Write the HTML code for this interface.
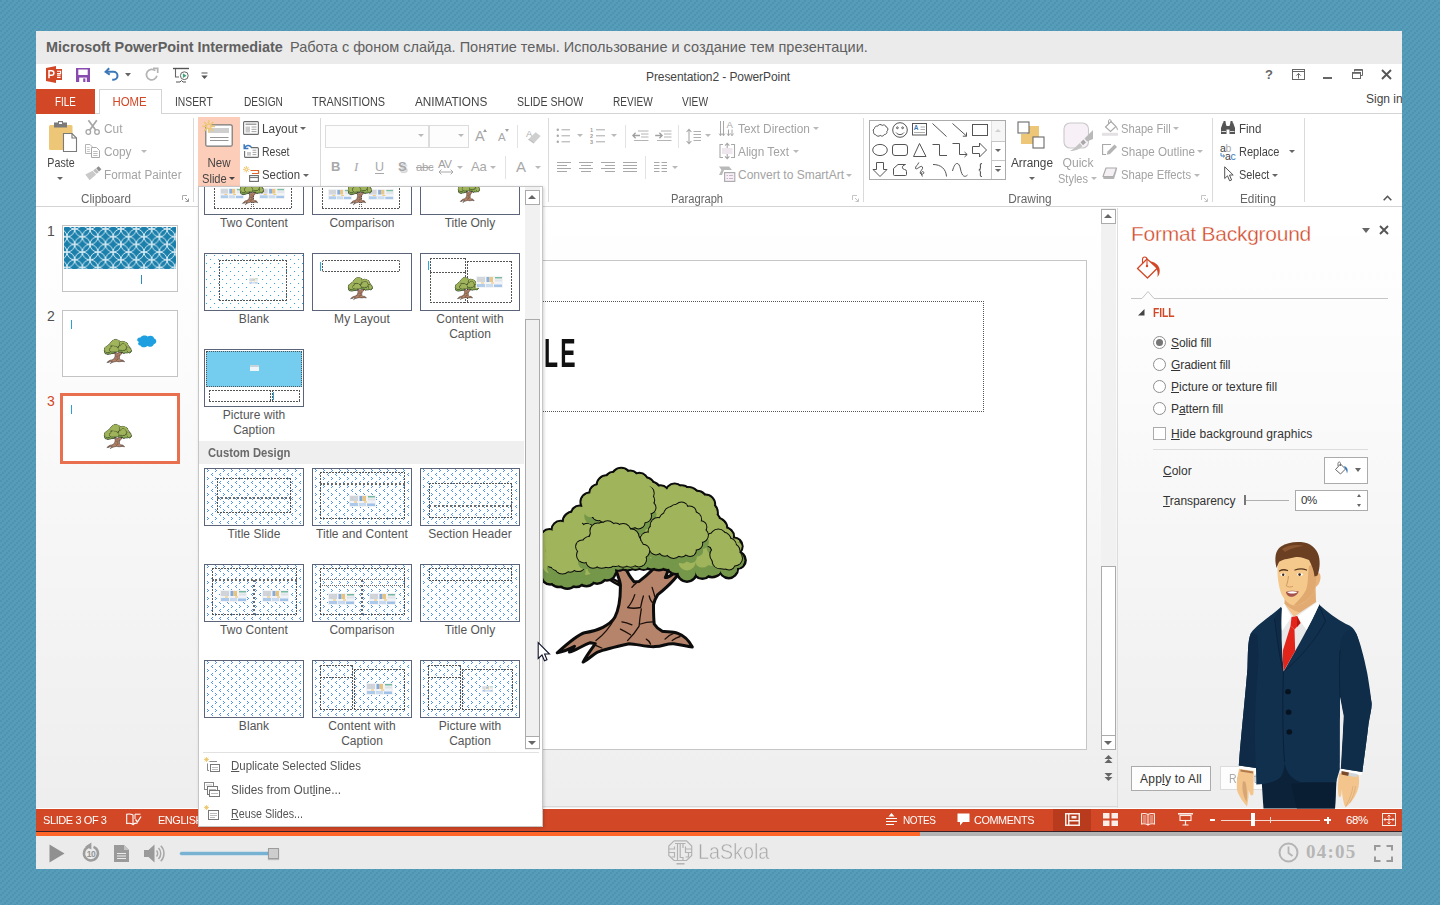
<!DOCTYPE html>
<html lang="en">
<head>
<meta charset="utf-8">
<title>Microsoft PowerPoint Intermediate</title>
<style>
*{box-sizing:border-box;margin:0;padding:0}
html,body{width:1440px;height:905px;overflow:hidden}
body{position:relative;font-family:"Liberation Sans",sans-serif;font-size:12px;color:#444;
 background-color:#569db9;
 background-image:radial-gradient(circle at 1px 1px,rgba(58,125,160,.3) .6px,rgba(58,125,160,0) 1.6px),radial-gradient(circle at 1px 1px,rgba(58,125,160,.3) .6px,rgba(58,125,160,0) 1.6px),radial-gradient(circle at 1px 1px,rgba(58,125,160,.3) .6px,rgba(58,125,160,0) 1.6px);
 background-size:6px 6px;background-position:0 0,4px 2px,2px 4px}
.a{position:absolute}
.t{position:absolute;white-space:nowrap;line-height:14px;height:14px}
.g{color:#a6a6a6}
.c{text-align:center}
u{text-decoration:underline;text-underline-offset:1px}
svg{position:absolute;overflow:visible}
#frame{position:absolute;left:36px;top:31px;width:1366px;height:838px;background:#fff;overflow:hidden}
/* inside frame coordinates are page coords minus (36,31): we instead use a wrapper shifted */
#page{position:absolute;left:-36px;top:-31px;width:1440px;height:905px}
.vsep{position:absolute;width:1px;background:#dadada}
.lbl{position:absolute;white-space:nowrap;line-height:14px;height:14px;color:#666;text-align:center}
.thumb{position:absolute;width:100px;height:58px;border:1px solid #5b6478;background:#fff;overflow:hidden}
.glabel{position:absolute;width:108px;text-align:center;line-height:15px;color:#555;font-size:12px;letter-spacing:-.1px}
.dash{position:absolute;background:linear-gradient(90deg,#555 2px,transparent 0) 0 0/3px 1px repeat-x,linear-gradient(90deg,#555 2px,transparent 0) 0 100%/3px 1px repeat-x,linear-gradient(#555 2px,transparent 0) 0 0/1px 3px repeat-y,linear-gradient(#555 2px,transparent 0) 100% 0/1px 3px repeat-y}
.radio{position:absolute;width:13px;height:13px;border:1px solid #8e8e8e;border-radius:50%;background:#fff}
</style>
</head>
<body>
<div id="frame"><div id="page">
<svg width="0" height="0" style="left:0;top:0">
<symbol id="tree" viewBox="536 466 212 198" overflow="visible">
<path d="M614.7 565.1 C617.6 577.4 621.2 581.7 620.4 587.4 C620.4 597.5 619.0 609.0 614.7 617.6 C610.4 624.8 597.5 631.2 584.5 632.7 C577.4 634.8 565.9 644.9 557.2 652.8 C564.4 651.3 570.2 648.5 574.5 646.3 L569.4 652.1 C575.9 650.6 581.7 645.6 590.3 642.7 L595.3 643.7 C590.3 650.6 586.0 656.4 583.1 662.1 C588.8 659.2 593.2 654.2 597.5 652.1 C604.6 649.2 620.4 645.6 629.1 643.7 C637.7 644.2 646.3 647.0 654.9 646.6 C663.5 646.3 666.4 643.1 673.6 643.7 C680.8 644.6 686.5 646.3 692.3 647.0 C689.4 641.3 683.7 635.5 677.9 633.4 C672.2 631.2 666.4 632.2 662.1 631.2 C657.8 629.1 655.6 626.2 654.2 624.0 C653.5 617.6 653.5 610.4 653.5 604.6 C654.9 598.9 656.4 596.7 657.8 594.6 C665.0 588.8 677.9 577.4 682.2 567.3 L678.6 566.6 C675.0 573.0 669.3 577.6 665.3 577.6 C667.1 573.0 669.3 568.7 669.6 563.7 L657.8 563.0 C653.5 570.2 646.3 575.9 639.1 581.4 L634.1 581.7 C630.5 577.4 627.6 573.0 625.9 568.4 Z" fill="#b5846a" stroke="#0c0c0c" stroke-width="3" stroke-linejoin="round"/>
<path d="M631.9 587.4Q634.1 584.5 636.3 583.1M627.6 607.5Q631.9 603.2 634.8 594.6M627.6 607.5Q633.4 609.0 640.6 607.5M640.6 607.5Q642.0 600.3 643.4 596.0M639.1 626.2Q639.8 617.6 641.3 609.0M621.9 621.9Q626.2 622.6 631.9 624.8M620.4 629.1Q626.2 631.9 630.5 634.8M640.6 624.0Q646.3 621.9 652.8 621.9M649.2 596.0Q650.6 601.8 653.5 603.2M652.1 587.4Q653.5 591.7 654.9 596.7M665.0 639.1Q667.9 635.5 673.6 633.4M672.2 640.6Q675.8 637.7 680.1 636.5M594.6 644.9Q598.9 647.0 601.8 648.0M646.3 639.1Q649.2 640.6 650.6 644.2M614.7 618.3Q607.5 631.9 596.0 640.6M639.1 626.2Q634.8 633.4 627.6 640.6" fill="none" stroke="#1a0f0a" stroke-width="1.3" stroke-linecap="round"/>
<path d="M602.5 568.0 C606.1 575.9 611.8 578.8 618.3 581.7 L620.4 586.0 C611.8 581.7 604.6 577.4 601.1 568.4 Z" fill="#9a6a52" stroke="#0c0c0c" stroke-width="2.2" stroke-linejoin="round"/>
<defs><g id="cv0"><circle cx="549.5" cy="538.6" r="8.0"/><circle cx="560.5" cy="529.7" r="7.5"/><circle cx="573.1" cy="522.0" r="9.0"/><circle cx="579.6" cy="514.2" r="7.2"/><circle cx="590.1" cy="511.0" r="8.6"/><circle cx="590.0" cy="502.0" r="8.1"/><circle cx="598.0" cy="492.9" r="7.2"/><circle cx="606.6" cy="485.2" r="8.5"/><circle cx="613.4" cy="480.4" r="7.1"/><circle cx="621.2" cy="477.5" r="8.3"/><circle cx="630.3" cy="479.2" r="7.2"/><circle cx="639.4" cy="481.6" r="7.3"/><circle cx="645.2" cy="487.1" r="8.3"/><circle cx="650.6" cy="492.6" r="9.5"/><circle cx="660.6" cy="494.2" r="7.4"/><circle cx="674.6" cy="492.6" r="7.7"/><circle cx="681.5" cy="495.6" r="8.9"/><circle cx="688.5" cy="498.2" r="9.8"/><circle cx="697.1" cy="501.0" r="8.7"/><circle cx="705.5" cy="504.2" r="8.2"/><circle cx="706.5" cy="512.8" r="9.9"/><circle cx="711.4" cy="520.3" r="7.1"/><circle cx="716.3" cy="528.6" r="9.6"/><circle cx="724.7" cy="536.7" r="7.9"/><circle cx="733.8" cy="546.3" r="7.4"/><circle cx="737.0" cy="560.2" r="7.4"/><circle cx="728.7" cy="569.0" r="7.9"/><circle cx="712.1" cy="566.7" r="9.4"/><circle cx="702.4" cy="570.1" r="7.5"/><circle cx="687.0" cy="571.7" r="8.7"/><circle cx="676.3" cy="564.1" r="8.9"/><circle cx="667.5" cy="560.8" r="8.1"/><circle cx="658.8" cy="560.3" r="8.6"/><circle cx="651.4" cy="561.2" r="7.2"/><circle cx="643.7" cy="561.4" r="7.2"/><circle cx="635.4" cy="560.8" r="7.6"/><circle cx="627.5" cy="559.9" r="9.0"/><circle cx="618.3" cy="561.0" r="8.3"/><circle cx="606.9" cy="571.3" r="7.9"/><circle cx="597.1" cy="573.6" r="8.8"/><circle cx="586.4" cy="576.5" r="8.4"/><circle cx="576.2" cy="577.8" r="7.9"/><circle cx="567.3" cy="578.1" r="9.4"/><circle cx="559.2" cy="576.7" r="9.1"/><circle cx="550.2" cy="575.6" r="7.7"/><circle cx="549.2" cy="566.4" r="8.7"/><circle cx="547.2" cy="557.5" r="8.6"/><circle cx="549.5" cy="547.9" r="9.6"/><polygon points="549.5,538.6 560.5,529.7 573.1,522.0 579.6,514.2 590.1,511.0 590.0,502.0 598.0,492.9 606.6,485.2 613.4,480.4 621.2,477.5 630.3,479.2 639.4,481.6 645.2,487.1 650.6,492.6 660.6,494.2 674.6,492.6 681.5,495.6 688.5,498.2 697.1,501.0 705.5,504.2 706.5,512.8 711.4,520.3 716.3,528.6 724.7,536.7 733.8,546.3 737.0,560.2 728.7,569.0 712.1,566.7 702.4,570.1 687.0,571.7 676.3,564.1 667.5,560.8 658.8,560.3 651.4,561.2 643.7,561.4 635.4,560.8 627.5,559.9 618.3,561.0 606.9,571.3 597.1,573.6 586.4,576.5 576.2,577.8 567.3,578.1 559.2,576.7 550.2,575.6 549.2,566.4 547.2,557.5 549.5,547.9"/></g>
<g id="cv1"><circle cx="584.3" cy="555.1" r="7.3"/><circle cx="582.3" cy="546.6" r="6.2"/><circle cx="590.1" cy="544.7" r="8.0"/><circle cx="594.6" cy="542.6" r="5.8"/><circle cx="596.4" cy="536.8" r="6.5"/><circle cx="597.8" cy="530.9" r="7.4"/><circle cx="602.4" cy="528.7" r="5.9"/><circle cx="607.7" cy="528.0" r="6.7"/><circle cx="615.7" cy="529.1" r="5.6"/><circle cx="623.2" cy="531.3" r="7.2"/><circle cx="631.2" cy="536.9" r="7.4"/><circle cx="633.6" cy="541.7" r="6.9"/><circle cx="635.3" cy="546.7" r="7.7"/><circle cx="642.9" cy="551.0" r="6.3"/><circle cx="638.9" cy="559.2" r="7.2"/><circle cx="630.7" cy="559.7" r="7.0"/><circle cx="622.9" cy="559.8" r="6.9"/><circle cx="615.3" cy="559.5" r="6.6"/><circle cx="608.3" cy="559.6" r="7.6"/><circle cx="601.7" cy="559.9" r="7.9"/><circle cx="593.1" cy="561.1" r="6.7"/><polygon points="584.3,555.1 582.3,546.6 590.1,544.7 594.6,542.6 596.4,536.8 597.8,530.9 602.4,528.7 607.7,528.0 615.7,529.1 623.2,531.3 631.2,536.9 633.6,541.7 635.3,546.7 642.9,551.0 638.9,559.2 630.7,559.7 622.9,559.8 615.3,559.5 608.3,559.6 601.7,559.9 593.1,561.1"/></g>
<g id="cv2"><circle cx="647.7" cy="539.7" r="7.2"/><circle cx="654.3" cy="531.1" r="5.7"/><circle cx="658.0" cy="525.3" r="7.3"/><circle cx="666.6" cy="520.2" r="7.1"/><circle cx="672.0" cy="514.9" r="8.0"/><circle cx="676.4" cy="512.4" r="7.6"/><circle cx="681.5" cy="508.6" r="6.2"/><circle cx="689.5" cy="512.9" r="6.5"/><circle cx="693.9" cy="519.4" r="7.2"/><circle cx="700.8" cy="526.9" r="5.6"/><circle cx="701.2" cy="535.3" r="6.7"/><circle cx="696.3" cy="543.7" r="5.9"/><circle cx="690.1" cy="550.1" r="5.8"/><circle cx="681.5" cy="550.8" r="5.6"/><circle cx="673.5" cy="550.6" r="7.4"/><circle cx="664.8" cy="550.0" r="5.8"/><circle cx="656.0" cy="548.3" r="6.1"/><circle cx="651.8" cy="544.0" r="6.5"/><polygon points="647.7,539.7 654.3,531.1 658.0,525.3 666.6,520.2 672.0,514.9 676.4,512.4 681.5,508.6 689.5,512.9 693.9,519.4 700.8,526.9 701.2,535.3 696.3,543.7 690.1,550.1 681.5,550.8 673.5,550.6 664.8,550.0 656.0,548.3 651.8,544.0"/></g>
<g id="cv3"><circle cx="591.0" cy="509.6" r="7.7"/><circle cx="591.4" cy="504.4" r="5.7"/><circle cx="594.1" cy="499.0" r="6.6"/><circle cx="599.0" cy="494.0" r="6.9"/><circle cx="603.9" cy="489.5" r="7.7"/><circle cx="610.0" cy="485.7" r="7.5"/><circle cx="615.8" cy="481.7" r="7.7"/><circle cx="622.7" cy="480.7" r="6.2"/><circle cx="629.8" cy="480.7" r="6.5"/><circle cx="635.0" cy="483.1" r="6.4"/><circle cx="639.6" cy="486.3" r="7.7"/><circle cx="645.8" cy="493.2" r="7.9"/><circle cx="648.3" cy="500.1" r="5.9"/><circle cx="649.6" cy="507.6" r="5.9"/><circle cx="645.0" cy="516.1" r="6.1"/><circle cx="638.5" cy="522.3" r="6.1"/><circle cx="631.6" cy="521.2" r="6.7"/><circle cx="625.5" cy="520.5" r="7.0"/><circle cx="617.8" cy="518.7" r="6.2"/><circle cx="609.3" cy="517.6" r="5.5"/><circle cx="604.4" cy="515.4" r="6.5"/><circle cx="598.5" cy="513.8" r="6.4"/><polygon points="591.0,509.6 591.4,504.4 594.1,499.0 599.0,494.0 603.9,489.5 610.0,485.7 615.8,481.7 622.7,480.7 629.8,480.7 635.0,483.1 639.6,486.3 645.8,493.2 648.3,500.1 649.6,507.6 645.0,516.1 638.5,522.3 631.6,521.2 625.5,520.5 617.8,518.7 609.3,517.6 604.4,515.4 598.5,513.8"/></g>
<g id="cv4"><circle cx="712.4" cy="540.3" r="6.9"/><circle cx="718.3" cy="537.5" r="7.9"/><circle cx="723.4" cy="540.0" r="7.2"/><circle cx="729.1" cy="545.3" r="6.8"/><circle cx="732.5" cy="551.0" r="7.0"/><circle cx="734.8" cy="558.2" r="7.2"/><circle cx="729.1" cy="563.8" r="5.6"/><circle cx="724.2" cy="561.0" r="7.7"/><circle cx="720.1" cy="560.9" r="7.4"/><circle cx="718.0" cy="555.0" r="7.7"/><circle cx="723.2" cy="550.0" r="7.5"/><circle cx="717.1" cy="545.8" r="6.5"/><polygon points="712.4,540.3 718.3,537.5 723.4,540.0 729.1,545.3 732.5,551.0 734.8,558.2 729.1,563.8 724.2,561.0 720.1,560.9 718.0,555.0 723.2,550.0 717.1,545.8"/></g>
<g id="cv5"><circle cx="550.7" cy="542.7" r="6.5"/><circle cx="559.0" cy="537.3" r="5.8"/><circle cx="564.0" cy="535.7" r="7.1"/><circle cx="568.2" cy="531.1" r="5.7"/><circle cx="573.2" cy="529.6" r="5.7"/><circle cx="578.4" cy="528.2" r="6.0"/><circle cx="587.3" cy="529.6" r="5.9"/><circle cx="582.4" cy="536.2" r="6.4"/><circle cx="578.2" cy="541.8" r="5.6"/><circle cx="573.6" cy="546.5" r="5.5"/><circle cx="573.1" cy="549.9" r="5.9"/><circle cx="573.3" cy="555.1" r="5.8"/><circle cx="578.3" cy="564.7" r="6.4"/><circle cx="570.2" cy="566.1" r="5.6"/><circle cx="562.4" cy="565.8" r="7.7"/><circle cx="557.4" cy="563.2" r="7.0"/><circle cx="551.6" cy="561.1" r="5.9"/><circle cx="551.6" cy="554.5" r="6.1"/><circle cx="551.5" cy="548.5" r="6.4"/><polygon points="550.7,542.7 559.0,537.3 564.0,535.7 568.2,531.1 573.2,529.6 578.4,528.2 587.3,529.6 582.4,536.2 578.2,541.8 573.6,546.5 573.1,549.9 573.3,555.1 578.3,564.7 570.2,566.1 562.4,565.8 557.4,563.2 551.6,561.1 551.6,554.5 551.5,548.5"/></g>
<mask id="cvmask" maskUnits="userSpaceOnUse" x="520" y="450" width="240" height="220"><use href="#cv0" fill="#fff" stroke="#fff" stroke-width="1"/></mask><mask id="cvmaskT" maskUnits="userSpaceOnUse" x="520" y="450" width="240" height="220"><use href="#cv0" fill="#fff" transform="translate(9,12)"/></mask></defs>
<use href="#cv0" fill="#0c0c0c" stroke="#0c0c0c" stroke-width="5" stroke-linejoin="round"/>
<use href="#cv0" fill="#74974a"/>
<g mask="url(#cvmask)"><use href="#cv0" fill="#a0b45c" transform="translate(0,-10)"/></g>
<g mask="url(#cvmask)"><use href="#cv5" fill="#74974a" transform="translate(1,7)"/></g><g mask="url(#cvmaskT)"><use href="#cv5" fill="#0c0c0c" stroke="#0c0c0c" stroke-width="2"/></g>
<use href="#cv5" fill="#a0b45c"/>
<g mask="url(#cvmask)"><use href="#cv3" fill="#74974a" transform="translate(1,7)"/></g><g mask="url(#cvmaskT)"><use href="#cv3" fill="#0c0c0c" stroke="#0c0c0c" stroke-width="2"/></g>
<use href="#cv3" fill="#a0b45c"/>
<g mask="url(#cvmask)"><use href="#cv4" fill="#74974a" transform="translate(1,7)"/></g><g mask="url(#cvmask)"><use href="#cv4" fill="#0c0c0c" stroke="#0c0c0c" stroke-width="2"/></g>
<use href="#cv4" fill="#a0b45c"/>
<g mask="url(#cvmask)"><use href="#cv2" fill="#74974a" transform="translate(1,7)"/></g><g mask="url(#cvmask)"><use href="#cv2" fill="#0c0c0c" stroke="#0c0c0c" stroke-width="2"/></g>
<use href="#cv2" fill="#a0b45c"/>
<g mask="url(#cvmask)"><use href="#cv1" fill="#74974a" transform="translate(1,7)"/></g><g mask="url(#cvmask)"><use href="#cv1" fill="#0c0c0c" stroke="#0c0c0c" stroke-width="2"/></g>
<use href="#cv1" fill="#a0b45c"/>
</symbol>
<pattern id="circ" width="15.4" height="15.4" patternUnits="userSpaceOnUse" x="3" y="2"><rect width="15.4" height="15.4" fill="#1a7fab"/><g fill="none" stroke="#e8f4fa" stroke-width=".9"><circle cx="0" cy="0" r="7.7"/><circle cx="15.4" cy="0" r="7.7"/><circle cx="0" cy="15.4" r="7.7"/><circle cx="15.4" cy="15.4" r="7.7"/><circle cx="7.7" cy="7.7" r="7.7"/></g></pattern>
</svg>
<!-- course title bar -->
<div class="a" style="left:36px;top:31px;width:1366px;height:33px;background:#ebebeb"></div>
<div class="t" style="left:46px;top:38px;height:18px;line-height:18px;font-size:14.4px;font-weight:bold;color:#606060;letter-spacing:-.02px">Microsoft PowerPoint Intermediate</div>
<div class="t" style="left:290px;top:38px;height:18px;line-height:18px;font-size:14.5px;color:#606060">Работа с фоном слайда. Понятие темы. Использование и создание тем презентации.</div>

<!-- QAT -->
<svg style="left:46px;top:66px" width="17" height="17" viewBox="0 0 17 17">
 <path d="M0 2 L10 0 L10 17 L0 15 Z" fill="#d24726"/>
 <path d="M10 3 H16 V14 H10 Z" fill="#d24726"/>
 <path d="M11 5.2 H14.6 V7.6 H11 M11 9.2 H14.6 M11 11.4 H14.6" stroke="#fff" stroke-width="1.1" fill="none"/>
 <path d="M3 12.3 V4.7 H5.6 A2.3 2.3 0 0 1 5.6 9.3 H3.2" stroke="#fff" stroke-width="1.5" fill="none"/>
</svg>
<svg style="left:76px;top:68px" width="14" height="14" viewBox="0 0 14 14">
 <path d="M0 0 H14 V14 H0 Z M2.3 1.6 V7 H11.7 V1.6 Z" fill="#8a4bb0" fill-rule="evenodd"/>
 <rect x="3.2" y="9.6" width="7.6" height="4.4" fill="#fff"/><rect x="7.2" y="10.4" width="2.2" height="3.6" fill="#8a4bb0"/>
</svg>
<svg style="left:104px;top:67px" width="16" height="15" viewBox="0 0 16 15">
 <path d="M5.2 1.2 L1.6 4.8 L5.8 7.6" stroke="#3c78b8" stroke-width="2" fill="none" stroke-linejoin="miter"/>
 <path d="M2.4 4.8 H9.5 A4 4 0 0 1 9.5 12.8 H8.2" stroke="#3c78b8" stroke-width="2" fill="none"/>
</svg>
<svg style="left:125px;top:73px" width="6" height="4" viewBox="0 0 6 4"><path d="M0 0 H6 L3 3.4 Z" fill="#666"/></svg>
<svg style="left:144px;top:67px" width="15" height="15" viewBox="0 0 15 15">
 <path d="M11.300 3.700 A5.300 5.300 0 1 0 12.900 8.800" stroke="#b4b4b4" stroke-width="1.700" fill="none"/>
 <path d="M9 1.400 H13.700 V6.100" stroke="#b4b4b4" stroke-width="1.700" fill="none"/>
</svg>
<svg style="left:173px;top:67px" width="17" height="17" viewBox="0 0 17 17">
 <path d="M0 1.5 H16" stroke="#555" stroke-width="1.4"/>
 <path d="M2.5 2 V10 H6" stroke="#666" stroke-width="1.1" fill="none"/>
 <path d="M3 15 H7 L8.5 13.5 L10 15 H13" stroke="#555" stroke-width="1" fill="none"/>
 <circle cx="11.3" cy="8.7" r="3.9" fill="#fff" stroke="#666" stroke-width="1"/>
 <path d="M9.9 6.3 L13.6 8.7 L9.9 11.1 Z" fill="#3fa37b"/>
</svg>
<svg style="left:201px;top:72px" width="7" height="8" viewBox="0 0 7 8"><path d="M.5 1 H6.5" stroke="#555" stroke-width="1"/><path d="M.3 3.5 H6.7 L3.5 7 Z" fill="#555"/></svg>
<div class="t c" style="left:618px;top:70px;width:200px;color:#444;letter-spacing:-.08px">Presentation2 - PowerPoint</div>
<!-- window controls -->
<div class="t" style="left:1265px;top:68px;font-weight:bold;font-size:13px;color:#666">?</div>
<svg style="left:1292px;top:69px" width="13" height="11" viewBox="0 0 13 11"><rect x=".5" y=".5" width="12" height="10" fill="none" stroke="#666"/><path d="M.5 2.5 H12.5" stroke="#666"/><path d="M6.5 9.5 V4.6 M4.3 6.6 L6.5 4.4 L8.7 6.6" stroke="#666" fill="none"/></svg>
<div class="a" style="left:1323px;top:77px;width:9px;height:2px;background:#666"></div>
<svg style="left:1352px;top:69px" width="11" height="11" viewBox="0 0 11 11"><path d="M2.5 2.5 V.5 H10.5 V6.5 H8.5" fill="none" stroke="#666"/><path d="M2.5 1 H10.5" stroke="#666" stroke-width="1.6"/><rect x=".5" y="3.5" width="8" height="6" fill="none" stroke="#666"/><path d="M.5 4 H8.5" stroke="#666" stroke-width="1.6"/></svg>
<svg style="left:1381px;top:69px" width="11" height="11" viewBox="0 0 11 11"><path d="M1 1 L10 10 M10 1 L1 10" stroke="#555" stroke-width="1.9"/></svg>

<!-- tabs -->
<div class="a" style="left:36px;top:113px;width:1366px;height:1px;background:#d4d4d4"></div>
<div class="a" style="left:36px;top:89px;width:59px;height:25px;background:#d24726"></div>
<div class="t c" style="left:36px;top:95px;width:59px;color:#fff;transform:scaleX(0.82);transform-origin:50% 50%">FILE</div>
<div class="a" style="left:99px;top:89px;width:63px;height:25px;background:#fff;border:1px solid #d4d4d4;border-bottom:none"></div>
<div class="t c" style="left:98px;top:95px;width:63px;color:#d24726;transform:scaleX(0.95);transform-origin:50% 50%">HOME</div>
<div class="t" style="left:175px;top:95px;transform:scaleX(0.861);transform-origin:0 50%">INSERT</div>
<div class="t" style="left:243.500px;top:95px;transform:scaleX(0.845);transform-origin:0 50%">DESIGN</div>
<div class="t" style="left:312px;top:95px;transform:scaleX(0.906);transform-origin:0 50%">TRANSITIONS</div>
<div class="t" style="left:415px;top:95px;transform:scaleX(0.981);transform-origin:0 50%">ANIMATIONS</div>
<div class="t" style="left:517px;top:95px;transform:scaleX(0.878);transform-origin:0 50%">SLIDE SHOW</div>
<div class="t" style="left:613px;top:95px;transform:scaleX(0.839);transform-origin:0 50%">REVIEW</div>
<div class="t" style="left:682px;top:95px;transform:scaleX(0.848);transform-origin:0 50%">VIEW</div>
<div class="t" style="left:1366px;top:92px;color:#444">Sign in</div>
<!-- RIBBON -->
<style>
.ar{position:absolute;width:0;height:0;border-left:3px solid transparent;border-right:3px solid transparent;border-top:3px solid #666}
.ar.g{border-top-color:#b9b9b9}
.rt{position:absolute;white-space:nowrap;line-height:14px;height:14px;font-size:12px;color:#444}
.rt.g{color:#a3a3a3}
.ln{position:absolute;height:1px;background:#ababab}
</style>
<div class="a" style="left:36px;top:206px;width:1366px;height:1px;background:#d4d4d4"></div>
<!-- group separators -->
<div class="vsep" style="left:193px;top:118px;height:84px"></div>
<div class="vsep" style="left:320px;top:118px;height:84px"></div>
<div class="vsep" style="left:548px;top:118px;height:84px"></div>
<div class="vsep" style="left:863px;top:118px;height:84px"></div>
<div class="vsep" style="left:1212px;top:118px;height:84px"></div>
<div class="vsep" style="left:1304px;top:118px;height:84px"></div>
<!-- group labels -->
<div class="lbl" style="left:66px;top:192px;width:80px;transform:scaleX(0.973);transform-origin:50% 50%">Clipboard</div>
<div class="lbl" style="left:657px;top:192px;width:80px;transform:scaleX(0.93);transform-origin:50% 50%">Paragraph</div>
<div class="lbl" style="left:990px;top:192px;width:80px;transform:scaleX(0.984);transform-origin:50% 50%">Drawing</div>
<div class="lbl" style="left:1218px;top:192px;width:80px;transform:scaleX(0.984);transform-origin:50% 50%">Editing</div>
<!-- launchers -->
<svg style="left:182px;top:195px" width="7" height="7" viewBox="0 0 7 7"><path d="M.5 5 V.5 H5" fill="none" stroke="#aaa"/><path d="M3 3 L6.5 6.5 M6.5 3.5 V6.5 H3.5" fill="none" stroke="#999"/></svg>
<svg style="left:852px;top:195px" width="7" height="7" viewBox="0 0 7 7"><path d="M.5 5 V.5 H5" fill="none" stroke="#c4c4c4"/><path d="M3 3 L6.5 6.5 M6.5 3.5 V6.5 H3.5" fill="none" stroke="#c4c4c4"/></svg>
<svg style="left:1201px;top:195px" width="7" height="7" viewBox="0 0 7 7"><path d="M.5 5 V.5 H5" fill="none" stroke="#c4c4c4"/><path d="M3 3 L6.5 6.5 M6.5 3.5 V6.5 H3.5" fill="none" stroke="#c4c4c4"/></svg>
<svg style="left:1383px;top:195px" width="9" height="6" viewBox="0 0 9 6"><path d="M.7 5.3 L4.5 1.3 L8.3 5.3" fill="none" stroke="#555" stroke-width="1.6"/></svg>

<!-- Clipboard group -->
<svg style="left:48px;top:121px" width="30" height="32" viewBox="0 0 30 32">
 <rect x="1" y="4" width="23.5" height="25" rx="1.5" fill="#edc677"/>
 <path d="M6 1.5 H10 V0 H15 V1.5 H19 V6.5 H6 Z" fill="#7a7a7a"/>
 <rect x="11" y="1.2" width="3" height="1.8" fill="#fff"/>
 <path d="M15.5 12.5 H24 L28.5 17 V30.5 H15.5 Z" fill="#fff" stroke="#7a7a7a" stroke-width="1.1"/>
 <path d="M24 12.5 V17 H28.5" fill="none" stroke="#7a7a7a" stroke-width="1.1"/>
</svg>
<div class="rt c" style="left:40px;top:156px;width:42px;transform:scaleX(0.89);transform-origin:50% 50%">Paste</div>
<div class="ar" style="left:57px;top:177px"></div>
<svg style="left:85px;top:120px" width="16" height="15" viewBox="0 0 16 15">
 <path d="M3.400 .3 L10.800 10.300 M11.800 .3 L4.600 10.300" stroke="#a6a6a6" stroke-width="1.700" fill="none"/>
 <circle cx="3.300" cy="12" r="2.300" fill="none" stroke="#a6a6a6" stroke-width="1.300"/><circle cx="12" cy="12" r="2.300" fill="none" stroke="#a6a6a6" stroke-width="1.300"/>
</svg>
<div class="rt g" style="left:104px;top:122px;transform:scaleX(0.99);transform-origin:0 50%">Cut</div>
<svg style="left:85px;top:144px" width="16" height="14" viewBox="0 0 16 14">
 <path d="M.5 .5 H5 L7.5 3 V9.5 H.5 Z" fill="#fff" stroke="#b4b4b4"/>
 <path d="M1.8 3.5 H4.5 M1.8 5.5 H5 M1.8 7.5 H5" stroke="#c4c4c4" stroke-width=".9"/>
 <path d="M6.5 3.5 H11.5 L14.5 6.5 V13.5 H6.5 Z" fill="#fff" stroke="#a8a8a8"/>
 <path d="M8.2 7.5 H12.6 M8.2 9.5 H12.6 M8.2 11.5 H12.6" stroke="#b4b4b4" stroke-width=".9"/>
</svg>
<div class="rt g" style="left:104px;top:145px;transform:scaleX(0.982);transform-origin:0 50%">Copy</div>
<div class="ar g" style="left:141px;top:150px"></div>
<svg style="left:85px;top:166px" width="17" height="15" viewBox="0 0 17 15">
 <path d="M11.2 2.3 L13.6 .3 L16.4 3.2 L14 5.4 Z" fill="#8f8f8f"/>
 <path d="M8.2 4.4 L10.6 2.6 L13.8 6 L11.6 7.8 Z" fill="#bdbdbd"/>
 <path d="M.3 8.6 L7.6 4.8 L11.2 8.6 L4.6 14.2 Z" fill="#c9c9c9"/>
</svg>
<div class="rt g" style="left:104px;top:168px;transform:scaleX(0.977);transform-origin:0 50%">Format Painter</div>

<!-- Slides group -->
<div class="a" style="left:198px;top:117px;width:42px;height:70px;background:#fccdb9"></div>
<svg style="left:199px;top:119px" width="36" height="30" viewBox="0 0 36 30">
 <rect x="6.8" y="5.8" width="26.4" height="21.4" rx="1.5" fill="#fff" stroke="#777" stroke-width="1.2"/>
 <rect x="10" y="9" width="20" height="5" fill="#cfcfcf"/>
 <path d="M11 18.5 H29.5 M11 21.5 H29.5" stroke="#8a8a8a" stroke-width=".9"/>
 <g transform="translate(3.2,1.2)"><path d="M6.5 0 V12.500 M.2 6.200 H12.800 M2 1.800 L11 10.700 M11 1.800 L2 10.700" stroke="#ecc877" stroke-width="1.700"/>
 <circle cx="6.500" cy="6.200" r="2.200" fill="#fccdb9" stroke="#ecc877" stroke-width="1.100"/></g>
</svg>
<div class="rt c" style="left:198px;top:156px;width:42px;transform:scaleX(0.96);transform-origin:50% 50%">New</div>
<div class="rt" style="left:202px;top:172px;transform:scaleX(0.926);transform-origin:0 50%">Slide</div>
<div class="ar" style="left:229px;top:177px;border-top-color:#444"></div>
<svg style="left:243px;top:121px" width="16" height="14" viewBox="0 0 16 14">
 <rect x=".6" y=".6" width="14.8" height="12.8" rx="1" fill="#fff" stroke="#6a6a6a" stroke-width="1.1"/>
 <path d="M2.5 3.2 H13.5" stroke="#8a8a8a" stroke-width="1.2"/><rect x="2.5" y="5.5" width="4.5" height="6" fill="#c9c9c9"/>
 <path d="M8.5 6 H13.5 M8.5 8.3 H13.5 M8.5 10.6 H13.5" stroke="#9a9a9a" stroke-width=".9"/>
</svg>
<div class="rt" style="left:262px;top:122px;transform:scaleX(0.985);transform-origin:0 50%">Layout</div>
<div class="ar" style="left:300px;top:127px"></div>
<svg style="left:243px;top:144px" width="16" height="14" viewBox="0 0 16 14">
 <rect x="1.6" y="3.6" width="13.8" height="9.8" rx="1" fill="#fff" stroke="#6a6a6a" stroke-width="1.1"/>
 <rect x="4" y="8" width="4" height="3.6" fill="#c9c9c9"/><path d="M9.5 6.2 H13.4 M9.5 8.4 H13.4 M9.5 10.6 H13.4" stroke="#9a9a9a" stroke-width=".9"/>
 <path d="M.2 2 H8 V7 H.2 Z" fill="#fff"/>
 <path d="M1.2 .2 V4.4 H5.4" fill="none" stroke="#3c78b8" stroke-width="1.5"/><path d="M1.8 4 C3 1.2 6.4 .6 8.4 3.4" fill="none" stroke="#3c78b8" stroke-width="1.5"/>
</svg>
<div class="rt" style="left:262px;top:145px;transform:scaleX(0.877);transform-origin:0 50%">Reset</div>
<svg style="left:243px;top:166px" width="17" height="16" viewBox="0 0 17 16">
 <path d="M3.3 0 V6.6 M0 3.3 H6.6 M1 1 L5.6 5.6 M5.6 1 L1 5.6" stroke="#ecc060" stroke-width=".9"/><circle cx="3.3" cy="3.3" r="1.2" fill="#fff" stroke="#ecc060" stroke-width=".8"/>
 <path d="M7.5 4.5 H15.5 V7.5 H9" fill="none" stroke="#e0662c" stroke-width="1.2"/>
 <rect x="6.6" y="9.6" width="8.8" height="5.8" fill="#fff" stroke="#6a6a6a" stroke-width="1.1"/><path d="M6.6 11.6 H15.4" stroke="#6a6a6a"/>
</svg>
<div class="rt" style="left:262px;top:168px;transform:scaleX(0.949);transform-origin:0 50%">Section</div>
<div class="ar" style="left:303px;top:174px"></div>
<!-- Font group -->
<div class="a" style="left:325px;top:125px;width:104px;height:23px;border:1px solid #dcdcdc;background:#fdfdfd"></div>
<div class="a" style="left:429px;top:125px;width:40px;height:23px;border:1px solid #dcdcdc;background:#fdfdfd"></div>
<div class="ar g" style="left:418px;top:134px"></div>
<div class="ar g" style="left:458px;top:134px"></div>
<div class="t g" style="left:475px;top:129px;font-size:14.5px;line-height:15px;height:15px;color:#a8a8a8">A</div>
<div class="ar g" style="left:483px;top:129px;transform:rotate(180deg);border-width:3px 2.5px 0 2.5px;border-top-color:#a0a0a0"></div>
<div class="t g" style="left:498px;top:131px;font-size:11.5px;line-height:13px;height:13px;color:#a8a8a8">A</div>
<div class="ar g" style="left:505px;top:129px;border-width:3px 2.5px 0 2.5px;border-top-color:#a0a0a0"></div>
<div class="vsep" style="left:517px;top:125px;height:23px;background:#e2e2e2"></div>
<svg style="left:526px;top:128px" width="16" height="16" viewBox="0 0 16 16">
 <text x="0" y="8.5" font-family="Liberation Sans, sans-serif" font-size="9.5" fill="#b0b0b0">A</text>
 <path d="M3.2 10.6 L9.6 4.2 L14.6 8 L8.6 14.4 Z" fill="#cfcfcf"/>
 <path d="M2 11.6 L3.2 10.4 L8.6 14.6 L7.6 15.6 Z" fill="#bdbdbd"/>
</svg>
<div class="t" style="left:331px;top:160px;font-weight:bold;font-size:13px;color:#a8a8a8">B</div>
<div class="t" style="left:354px;top:160px;font-style:italic;font-size:13px;color:#a8a8a8;font-family:'Liberation Serif',serif">I</div>
<div class="t" style="left:375px;top:160px;font-size:12.5px;color:#a8a8a8;text-decoration:underline;text-underline-offset:2px">U</div>
<div class="t" style="left:398px;top:160px;font-weight:bold;font-size:13px;color:#a8a8a8;text-shadow:1.5px 1.5px 1px #d0d0d0">S</div>
<div class="t" style="left:416px;top:160px;font-size:11.5px;color:#a8a8a8;text-decoration:line-through;letter-spacing:-.4px">abc</div>
<div class="t" style="left:438px;top:157px;font-size:11.5px;color:#a0a0a0;letter-spacing:-.6px">AV</div>
<svg style="left:438px;top:169px" width="16" height="6" viewBox="0 0 16 6"><path d="M1 3 H15 M3.4 .6 L1 3 L3.4 5.4 M12.6 .6 L15 3 L12.6 5.4" fill="none" stroke="#a8a8a8"/></svg>
<div class="ar g" style="left:457px;top:166px"></div>
<div class="t" style="left:471px;top:160px;font-size:13px;color:#a8a8a8;letter-spacing:-.2px">Aa</div>
<div class="ar g" style="left:490px;top:166px"></div>
<div class="vsep" style="left:505px;top:156px;height:23px;background:#e2e2e2"></div>
<div class="t" style="left:516px;top:158px;font-size:15px;line-height:17px;height:17px;color:#a8a8a8">A</div>
<div class="ar g" style="left:535px;top:166px"></div>

<!-- Paragraph group -->
<svg style="left:556px;top:127px" width="16" height="17" viewBox="0 0 16 17"><g fill="#a8a8a8"><circle cx="1.8" cy="2.8" r="1.2"/><circle cx="1.8" cy="8.8" r="1.2"/><circle cx="1.8" cy="14.8" r="1.2"/></g><path d="M5.5 2.8 H14 M5.5 8.8 H14 M5.5 14.8 H14" stroke="#a8a8a8"/></svg>
<div class="ar g" style="left:577px;top:134px"></div>
<svg style="left:590px;top:127px" width="16" height="17" viewBox="0 0 16 17"><path d="M6 2.8 H15 M6 8.8 H15 M6 14.8 H15" stroke="#a8a8a8"/>
 <g font-family="Liberation Sans, sans-serif" font-size="5.5" fill="#a0a0a0" font-weight="bold"><text x="0" y="4.8">1</text><text x="0" y="10.8">2</text><text x="0" y="16.8">3</text></g></svg>
<div class="ar g" style="left:611px;top:134px"></div>
<div class="vsep" style="left:625px;top:125px;height:23px;background:#e2e2e2"></div>
<svg style="left:632px;top:130px" width="17" height="12" viewBox="0 0 17 12"><path d="M6 1 H16.5 M9 4 H16.5 M9 7 H16.5 M2 10.5 H16.5" stroke="#b4b4b4"/><path d="M.8 5.5 H8 M3.6 2.8 L.9 5.5 L3.6 8.2" fill="none" stroke="#a0a0a0" stroke-width="1.3"/></svg>
<svg style="left:655px;top:130px" width="17" height="12" viewBox="0 0 17 12"><path d="M6 1 H16.5 M9 4 H16.5 M9 7 H16.5 M2 10.5 H16.5" stroke="#b4b4b4"/><path d="M.2 5.5 H7 M4.4 2.8 L7.1 5.5 L4.4 8.2" fill="none" stroke="#a0a0a0" stroke-width="1.3"/></svg>
<div class="vsep" style="left:678px;top:125px;height:23px;background:#e2e2e2"></div>
<svg style="left:686px;top:128px" width="16" height="17" viewBox="0 0 16 17"><path d="M3 1.5 V15.5 M.6 4 L3 1.4 L5.4 4 M.6 13 L3 15.6 L5.4 13" fill="none" stroke="#a8a8a8" stroke-width="1.1"/><path d="M7.5 3.5 H15 M7.5 6.5 H15 M7.5 9.5 H15 M7.5 12.5 H15" stroke="#b0b0b0"/></svg>
<div class="ar g" style="left:705px;top:134px"></div>
<svg style="left:556px;top:161px" width="16" height="12" viewBox="0 0 16 12"><path d="M1 1.5 H15 M1 4.5 H11 M1 7.5 H15 M1 10.5 H11" stroke="#a8a8a8"/></svg>
<svg style="left:578px;top:161px" width="16" height="12" viewBox="0 0 16 12"><path d="M1 1.5 H15 M3 4.5 H13 M1 7.5 H15 M3 10.5 H13" stroke="#a8a8a8"/></svg>
<svg style="left:600px;top:161px" width="16" height="12" viewBox="0 0 16 12"><path d="M1 1.5 H15 M5 4.5 H15 M1 7.5 H15 M5 10.5 H15" stroke="#a8a8a8"/></svg>
<svg style="left:622px;top:161px" width="16" height="12" viewBox="0 0 16 12"><path d="M1 1.5 H15 M1 4.5 H15 M1 7.5 H15 M1 10.5 H15" stroke="#a8a8a8"/></svg>
<div class="vsep" style="left:645px;top:156px;height:23px;background:#e2e2e2"></div>
<svg style="left:653px;top:161px" width="15" height="12" viewBox="0 0 15 12"><path d="M1 1.5 H6.5 M8.5 1.5 H14 M1 4.5 H6.5 M8.5 4.5 H14 M1 7.5 H6.5 M8.5 7.5 H14 M1 10.5 H6.5 M8.5 10.5 H14" stroke="#a8a8a8"/></svg>
<div class="ar g" style="left:672px;top:166px"></div>
<svg style="left:719px;top:120px" width="16" height="17" viewBox="0 0 16 17"><path d="M1.5 1 V15.5 M4.5 1 V15.5 M9.5 9.5 V15.5 M13 9.5 V15.5" stroke="#a8a8a8"/><path d="M0 13.5 L1.5 15.8 L3 13.5 M3 13.5 L4.5 15.8 L6 13.5 M8 13.5 L9.5 15.8 L11 13.5 M11.5 13.5 L13 15.8 L14.5 13.5" fill="none" stroke="#a8a8a8" stroke-width=".9"/>
 <text x="7.6" y="7.6" font-family="Liberation Sans, sans-serif" font-size="9.5" fill="#a8a8a8">A</text></svg>
<div class="rt g" style="left:738px;top:122px;transform:scaleX(0.99);transform-origin:0 50%">Text Direction</div>
<div class="ar g" style="left:813px;top:127px"></div>
<svg style="left:719px;top:143px" width="17" height="16" viewBox="0 0 17 16"><path d="M4 1.5 H1 V14.5 H4 M12 1.5 H15.5 V14.5 H12" fill="none" stroke="#a8a8a8" stroke-width="1.1"/><path d="M3 6 H13.5 M3 8 H13.5 M3 10 H13.5" stroke="#d9c9d9" stroke-width=".9"/><path d="M8.2 .5 V5 M6 2.6 L8.2 .4 L10.4 2.6 M8.2 11 V15.5 M6 13.4 L8.2 15.6 L10.4 13.4" fill="none" stroke="#a8a8a8" stroke-width="1.1"/></svg>
<div class="rt g" style="left:738px;top:145px;transform:scaleX(0.984);transform-origin:0 50%">Align Text</div>
<div class="ar g" style="left:793px;top:150px"></div>
<svg style="left:719px;top:166px" width="17" height="16" viewBox="0 0 17 16"><path d="M0 .5 H10 L13 4 H5 L3 9 H0 L2.5 4 Z" fill="#b9b9b9"/><rect x="5.6" y="6.6" width="10.2" height="8.8" fill="#f7eef7" stroke="#a8a8a8" stroke-width="1.1"/><path d="M7.5 9.5 H9 M10 9.5 H14 M7.5 12.5 H9 M10 12.5 H14" stroke="#c0b0c0" stroke-width=".9"/></svg>
<div class="rt g" style="left:738px;top:168px;transform:scaleX(1.0);transform-origin:0 50%">Convert to SmartArt</div>
<div class="ar g" style="left:846px;top:174px"></div>
<!-- Drawing group: shapes gallery -->
<div class="a" style="left:869px;top:120px;width:137px;height:60px;border:1px solid #ababab;background:#fff"></div>
<div class="a" style="left:991px;top:121px;width:14px;height:20px;background:#f6f6f6;border-left:1px solid #e0e0e0"></div>
<div class="a" style="left:991px;top:141px;width:14px;height:20px;border:1px solid #c6c6c6;border-right:none"></div>
<div class="a" style="left:991px;top:160px;width:14px;height:19px;border:1px solid #c6c6c6;border-right:none;border-bottom:none"></div>
<div class="ar" style="left:995px;top:129px;transform:rotate(180deg);border-top-color:#d0d0d0"></div>
<div class="ar" style="left:995px;top:149px"></div>
<div class="a" style="left:995px;top:166px;width:6px;height:1px;background:#666"></div>
<div class="ar" style="left:995px;top:169px"></div>
<svg style="left:870px;top:121px" width="120" height="58" viewBox="870 121 120 58" fill="none" stroke="#555" stroke-width="1">
 <!-- row1 -->
 <path d="M874.400 128.600 a2.600 2.600 0 0 1 3.200 -2.400 a2.800 2.800 0 0 1 4.600 -.8 a2.600 2.600 0 0 1 4 1.600 a2.300 2.300 0 0 1 .6 4.200 a2.300 2.300 0 0 1 -2.400 3.200 a2.600 2.600 0 0 1 -4.200 1 a2.800 2.800 0 0 1 -4.400 -.6 a2.400 2.400 0 0 1 -2.200 -3 a2.200 2.200 0 0 1 .8 -3.200 Z"/>
 <circle cx="900" cy="130" r="7.3"/><circle cx="897.4" cy="127.8" r=".9"/><circle cx="902.6" cy="127.8" r=".9"/><path d="M896 132.500 C898 135.300 902 135.300 904 132.500"/>
 <rect x="912.500" y="123.500" width="14" height="11.500" stroke="#555"/><path d="M920.500 127 H925 M920.500 129.500 H925 M914 132.500 H925" stroke="#999" stroke-width=".8"/>
 <text x="913.800" y="130.300" font-family="Liberation Sans, sans-serif" font-size="6.500" font-weight="bold" fill="#3c78b8" stroke="none">A</text>
 <path d="M932.500 123.500 L946.500 136.500"/>
 <path d="M952.500 123.500 L966.500 136 M966.500 132.500 V136.200 H962.800"/>
 <rect x="972.500" y="124.500" width="15" height="11"/>
 <!-- row2 -->
 <ellipse cx="880" cy="150" rx="7.300" ry="5.600"/>
 <rect x="892.500" y="144.500" width="15" height="11" rx="2.500"/>
 <path d="M919.500 143.500 L926 156.500 H913.500 Z"/>
 <path d="M932.500 144.500 H939.500 V155.500 H947"/>
 <path d="M952.500 143.500 H959.500 V154.500 H967 M964.500 152 L967.200 154.500 L964.500 157"/>
 <path d="M972.500 146.500 H979.500 V143 L986.500 150 L979.500 157 V153.500 H972.500 Z"/>
 <!-- row3 -->
 <path d="M876.500 162.500 H883.500 V169.500 H887 L880 176.500 L873 169.500 H876.500 Z"/>
 <path d="M894.500 175.500 Q893.500 175.500 893.500 174.500 V168.500 L898 164.500 H905.500 C901.500 165.500 901.500 169 904.500 169.500 Q906.500 169.500 906.500 171.500 V174.500 Q906.500 175.500 905.500 175.500 Z"/>
 <path d="M918.800 162.500 C918 165 915 166.500 915.500 168.500 C916.500 170.500 921 164.500 922.500 167 C923.500 169.500 919.500 171 920.200 173.200 C921 175 924.200 174.200 923.800 172.400 C923.400 170.800 921 171.600 921.200 173.500 L922.400 176.500"/>
 <path d="M933 164.500 C941 164.500 946 169 946.500 176.500"/>
 <path d="M952.500 171 C955 161 959 161.500 960.500 169 C962 177 965 177.500 967.500 175"/>
 <path d="M982 163.500 C979.500 163.500 980.500 166 980.500 167.500 C980.500 169 980 169.800 978.800 170 C980 170.200 980.500 171 980.500 172.500 C980.500 174 979.500 176.500 982 176.500" stroke-width="1.100"/>
</svg>
<!-- Arrange -->
<svg style="left:1017px;top:121px" width="30" height="29" viewBox="0 0 30 29">
 <rect x="10" y="5" width="12" height="12" fill="#edc677"/><rect x="4" y="13" width="12" height="10" fill="#edc677"/>
 <rect x="1" y="1" width="11" height="11" fill="#fff" stroke="#6a6a6a" stroke-width="1.100"/>
 <rect x="16" y="16" width="11" height="11" fill="#fff" stroke="#6a6a6a" stroke-width="1.100"/>
</svg>
<div class="rt c" style="left:1008px;top:156px;width:48px;transform:scaleX(0.984);transform-origin:50% 50%">Arrange</div>
<div class="ar" style="left:1029px;top:177px"></div>
<!-- Quick styles -->
<svg style="left:1063px;top:122px" width="31" height="30" viewBox="0 0 31 30">
 <rect x="1" y="1" width="24.500" height="25" rx="6" fill="#f7f1f7" stroke="#c9c9c9" stroke-width="1.100"/>
 <path d="M30 8 V17 L24 19.500 L21.500 16.500 Z" fill="#b9b9b9"/>
 <path d="M20.500 17.500 L23 20.500 L20 23.200 L17.500 20.200 Z" fill="#a8a8a8"/>
 <path d="M16.800 21 L19.300 24 C17 27.500 12 29 7 29 C11 27 13.500 24 16.800 21 Z" fill="#c4c4c4"/>
</svg>
<div class="rt g c" style="left:1056px;top:156px;width:44px;transform:scaleX(1.01);transform-origin:50% 50%">Quick</div>
<div class="rt g" style="left:1058px;top:172px;transform:scaleX(0.918);transform-origin:0 50%">Styles</div>
<div class="ar g" style="left:1091px;top:177px"></div>
<!-- Shape Fill / Outline / Effects -->
<svg style="left:1102px;top:119px" width="17" height="17" viewBox="0 0 17 17">
 <path d="M3.500 8 L9 2.500 L14 7.500 L8.500 12.500 Z" fill="#fff" stroke="#a8a8a8" stroke-width="1.100"/>
 <path d="M6.500 5 V1.800 C6.500 .2 9 .2 9 1.800 V4" fill="none" stroke="#a8a8a8"/>
 <path d="M13.500 7 C16 8.500 16.500 10 15.500 11.800 C14.500 10 14 8.500 13.500 7 Z" fill="#b4b4b4"/>
 <rect x="0" y="13.800" width="16" height="3" fill="#e4e0e4"/>
</svg>
<div class="rt g" style="left:1121px;top:122px;transform:scaleX(0.931);transform-origin:0 50%">Shape Fill</div>
<div class="ar g" style="left:1173px;top:127px"></div>
<svg style="left:1102px;top:143px" width="17" height="15" viewBox="0 0 17 15">
 <path d="M9 1.500 H.600 V11.500 H4" fill="none" stroke="#a8a8a8" stroke-width="1.100"/>
 <path d="M12.500 1.500 L15 4 L8 11 L4.800 11.800 L5.500 8.500 Z" fill="#b4b4b4"/>
</svg>
<div class="rt g" style="left:1121px;top:145px;transform:scaleX(0.973);transform-origin:0 50%">Shape Outline</div>
<div class="ar g" style="left:1197px;top:150px"></div>
<svg style="left:1102px;top:167px" width="17" height="14" viewBox="0 0 17 14">
 <path d="M4 1 H14.500 L11.500 9.500 H1 Z" fill="#f4f0f4" stroke="#a8a8a8" stroke-width="1.100" stroke-linejoin="round"/>
 <path d="M1 9.500 H11.500 L14.500 1 V4 L12 12 H1.500 Z" fill="#b4b4b4"/>
</svg>
<div class="rt g" style="left:1121px;top:168px;transform:scaleX(0.94);transform-origin:0 50%">Shape Effects</div>
<div class="ar g" style="left:1194px;top:174px"></div>

<!-- Editing group -->
<svg style="left:1220px;top:121px" width="16" height="14" viewBox="0 0 16 14">
 <path d="M1 13 V7 L3 1.500 H5.500 L6.500 5 H9.500 L10.500 1.500 H13 L15 7 V13 H9.500 V8.500 H6.500 V13 Z" fill="#555"/>
 <path d="M3.500 0 H5.500 V2 H3.500 Z M10.500 0 H12.500 V2 H10.500 Z" fill="#555"/>
 <path d="M1.500 10.500 H6 M10 10.500 H14.500" stroke="#fff" stroke-width=".8"/>
</svg>
<div class="rt" style="left:1239px;top:122px;transform:scaleX(0.96);transform-origin:0 50%">Find</div>
<div class="t" style="left:1220px;top:141px;font-size:10.500px;color:#444;letter-spacing:-.3px">a<span style="color:#aaa">b</span></div>
<div class="t" style="left:1225px;top:149px;font-size:10.500px;color:#3c78b8;letter-spacing:-.3px"><span style="color:#444">a</span>c</div>
<svg style="left:1220px;top:153px" width="5" height="5" viewBox="0 0 5 5"><path d="M1 0 V3 H4.500 M3 1.500 L4.600 3 L3 4.500" fill="none" stroke="#3c78b8" stroke-width=".9"/></svg>
<div class="rt" style="left:1239px;top:145px;transform:scaleX(0.918);transform-origin:0 50%">Replace</div>
<div class="ar" style="left:1289px;top:150px"></div>
<svg style="left:1224px;top:166px" width="10" height="16" viewBox="0 0 10 16"><path d="M.700 .800 V12.500 L3.500 9.800 L5.600 14.800 L7.600 14 L5.500 9 H9.200 Z" fill="#fff" stroke="#555" stroke-width="1"/></svg>
<div class="rt" style="left:1239px;top:168px;transform:scaleX(0.911);transform-origin:0 50%">Select</div>
<div class="ar" style="left:1272px;top:174px"></div>
<!-- MAIN AREA background gradient -->
<div class="a" style="left:36px;top:207px;width:1366px;height:601px;background:linear-gradient(#fff 0,#fcfcfc 25%,#f5f5f5 60%,#eeeeee 100%)"></div>
<!-- slide panel -->
<div class="t" style="left:47px;top:223px;font-size:14px;line-height:16px;height:16px;color:#505050">1</div>
<div class="a" style="left:62px;top:225px;width:116px;height:67px;background:#fff;border:1px solid #c3c3c3"></div>
<svg style="left:64px;top:227px" width="112" height="42"><rect width="112" height="42" fill="url(#circ)"/></svg>
<div class="a" style="left:141px;top:275px;width:1px;height:9px;background:#2a8fc0"></div>
<div class="t" style="left:47px;top:308px;font-size:14px;line-height:16px;height:16px;color:#505050">2</div>
<div class="a" style="left:62px;top:310px;width:116px;height:67px;background:#fff;border:1px solid #c3c3c3"></div>
<div class="a" style="left:71px;top:320px;width:1px;height:9px;background:#2a9fd8"></div>
<svg style="left:104px;top:339px" width="28" height="25" viewBox="0 0 212 198" preserveAspectRatio="none"><use href="#tree" width="212" height="198"/></svg>
<svg style="left:136px;top:335px" width="21" height="13" viewBox="0 0 21 13"><path d="M3 7 C0 6 1 2 4.500 2.500 C6 0 10 0 11.500 1.500 C14 0 18 .5 18 3.500 C21 4 21 8.500 18 9 C17 12 13 12.500 11.500 11 C9 13 5 12.500 4.500 10.500 C2 10.500 1.500 8 3 7 Z" fill="#1e9fe0"/></svg>
<div class="t" style="left:47px;top:393px;font-size:14px;line-height:16px;height:16px;color:#d24726">3</div>
<div class="a" style="left:60px;top:393px;width:120px;height:71px;background:#fff;border:3px solid #e9704e"></div>
<div class="a" style="left:71px;top:405px;width:1px;height:9px;background:#2a9fd8"></div>
<svg style="left:104px;top:424px" width="28" height="25" viewBox="0 0 212 198" preserveAspectRatio="none"><use href="#tree" width="212" height="198"/></svg>

<!-- workspace: slide -->
<div class="a" style="left:239px;top:260px;width:848px;height:490px;background:#fff;border:1px solid #c6c6c6"></div>
<div class="a" style="left:340px;top:301px;width:644px;height:111px;border:1px dotted #555"></div>
<div class="t" style="left:544px;top:331px;font-size:41px;font-weight:bold;line-height:44px;height:44px;color:#111;letter-spacing:4px;transform:scaleX(.56);transform-origin:0 0">LE</div>
<svg style="left:536px;top:466px" width="212" height="198" viewBox="0 0 212 198"><use href="#tree" width="212" height="198"/></svg>
<div class="a" style="left:198px;top:806px;width:920px;height:1px;background:#d9d9d9"></div>
<!-- workspace scrollbar -->
<div class="a" style="left:1101px;top:208px;width:15px;height:543px;background:#f1f1f1"></div>
<div class="a" style="left:1117px;top:208px;width:1px;height:600px;background:#dcdcdc"></div>
<div class="a" style="left:1101px;top:209px;width:15px;height:15px;background:#fff;border:1px solid #ababab"></div>
<div class="ar" style="left:1105px;top:214px;transform:rotate(180deg);border-top-width:4px;border-left-width:4px;border-right-width:4px;left:1104px"></div>
<div class="a" style="left:1101px;top:566px;width:15px;height:170px;background:#fff;border:1px solid #ababab"></div>
<div class="a" style="left:1101px;top:735px;width:15px;height:15px;background:#fff;border:1px solid #ababab"></div>
<div class="ar" style="left:1104px;top:741px;border-top-width:4px;border-left-width:4px;border-right-width:4px"></div>
<svg style="left:1104px;top:755px" width="9" height="26" viewBox="0 0 9 26"><path d="M4.500 0 L8.500 4 H.5 Z M4.500 4 L8.500 8 H.5 Z M.5 18 H8.500 L4.500 22 Z M.5 22 H8.500 L4.500 26 Z" fill="#666"/></svg>
<!-- FORMAT BACKGROUND PANE -->
<div class="t" style="left:1131px;top:220.500px;font-size:21px;line-height:26px;height:26px;color:#d24726;letter-spacing:-.26px;-webkit-text-stroke:.35px #fdfdfd">Format Background</div>
<div class="ar" style="left:1362px;top:228px;border-width:5px 4.500px 0 4.500px;border-style:solid;border-color:#666 transparent transparent transparent"></div>
<svg style="left:1379px;top:225px" width="10" height="10" viewBox="0 0 10 10"><path d="M1 1 L9 9 M9 1 L1 9" stroke="#555" stroke-width="1.900"/></svg>
<svg style="left:1136px;top:256px" width="26" height="24" viewBox="0 0 26 24">
 <path d="M1.500 12.500 L11 3 L21.500 12 L11.500 22 Z" fill="none" stroke="#d24726" stroke-width="1.300" stroke-linejoin="round"/>
 <path d="M11 9.500 V3.500 C11 .2 6.500 .2 6.500 3.500 V7.500" fill="none" stroke="#d24726" stroke-width="1.100"/>
 <circle cx="11" cy="10" r="1.200" fill="#d24726"/>
 <path d="M14 5.500 C20 6 25 10.500 23.500 17 C23 19 22 20.500 21.500 21 C22 17.500 21.500 14 20 12 Z" fill="#d24726"/>
</svg>
<svg style="left:1131px;top:289px" width="258" height="11" viewBox="0 0 258 11"><path d="M0 9.500 H11 L17 2.500 L23 9.500 H257" fill="none" stroke="#c6c6c6" stroke-width="1"/></svg>
<svg style="left:1138px;top:309px" width="7" height="7" viewBox="0 0 7 7"><path d="M6.500 0 V6.500 H0 Z" fill="#444"/></svg>
<div class="t" style="left:1153px;top:306px;font-weight:bold;color:#d24726;font-size:12.5px;transform:scaleX(.82);transform-origin:0 50%">FILL</div>
<div class="radio" style="left:1153px;top:336px"></div><div class="a" style="left:1156px;top:339px;width:7px;height:7px;border-radius:50%;background:#767676"></div>
<div class="radio" style="left:1153px;top:358px"></div>
<div class="radio" style="left:1153px;top:380px"></div>
<div class="radio" style="left:1153px;top:402px"></div>
<div class="t" style="left:1171px;top:336px;color:#333;letter-spacing:-.1px"><u>S</u>olid fill</div>
<div class="t" style="left:1171px;top:358px;color:#333;letter-spacing:-.1px"><u>G</u>radient fill</div>
<div class="t" style="left:1171px;top:380px;color:#333"><u>P</u>icture or texture fill</div>
<div class="t" style="left:1171px;top:402px;color:#333;letter-spacing:-.1px">P<u>a</u>ttern fill</div>
<div class="a" style="left:1153px;top:427px;width:13px;height:13px;background:#fff;border:1px solid #ababab"></div>
<div class="t" style="left:1171px;top:427px;color:#333;letter-spacing:.08px"><u>H</u>ide background graphics</div>
<div class="a" style="left:1153px;top:449px;width:215px;height:1px;background:#dcdcdc"></div>
<div class="t" style="left:1163px;top:464px;color:#333"><u>C</u>olor</div>
<div class="a" style="left:1324px;top:457px;width:44px;height:27px;background:#fff;border:1px solid #ababab"></div>
<svg style="left:1334px;top:461px" width="16" height="16" viewBox="0 0 16 16">
 <path d="M1.500 8.500 L6.500 3 L11.500 8 L6.500 13 Z" fill="#fff" stroke="#666" stroke-width="1"/>
 <path d="M6.500 5 V2.500 C6.500 .5 4 .5 4 2.500 V5" fill="none" stroke="#666" stroke-width=".9"/>
 <path d="M10 5 C13.500 6 14.500 9 13 12.500 C12.500 10 12 8.500 11 7.500 Z" fill="#3c78b8"/>
</svg>
<div class="ar" style="left:1355px;top:468px;border-width:4px 3.500px 0 3.500px;border-style:solid;border-color:#666 transparent transparent transparent"></div>
<div class="t" style="left:1163px;top:494px;color:#333;letter-spacing:-.05px"><u>T</u>ransparency</div>
<div class="a" style="left:1244px;top:495px;width:2px;height:10px;background:#777"></div>
<div class="a" style="left:1246px;top:500px;width:43px;height:1px;background:#b0b0b0"></div>
<div class="a" style="left:1295px;top:490px;width:73px;height:21px;background:#fff;border:1px solid #ababab"></div>
<div class="t" style="left:1301px;top:493px;color:#333;font-size:11.500px;letter-spacing:-.3px">0%</div>
<div class="ar" style="left:1357px;top:494px;transform:rotate(180deg);border-width:3px 2.500px 0 2.500px;border-style:solid;border-color:#666 transparent transparent transparent"></div>
<div class="ar" style="left:1357px;top:504px;border-width:3px 2.500px 0 2.500px;border-style:solid;border-color:#666 transparent transparent transparent"></div>
<!-- buttons -->
<div class="a" style="left:1131px;top:766px;width:80px;height:25px;background:#fdfdfd;border:1px solid #ababab"></div>
<div class="t c" style="left:1131px;top:772px;width:80px;color:#333;letter-spacing:.2px">App<u>l</u>y to All</div>
<div class="a" style="left:1220px;top:766px;width:110px;height:24px;background:#fdfdfd;border:1px solid #dcdcdc"></div>
<div class="t" style="left:1229px;top:772px;color:#ababab;transform:scaleX(.88);transform-origin:0 50%">Reset Background</div>
<!-- PRESENTER -->
<svg style="left:1225px;top:535px" width="160" height="274" viewBox="1225 535 160 274">
 <defs><clipPath id="manclip"><rect x="1225" y="535" width="160" height="273.500"/></clipPath></defs>
 <g clip-path="url(#manclip)">
 <!-- trousers -->
 <path d="M1260 756 L1263.500 809 H1335 L1337 756 Z" fill="#0c2238"/>
 <path d="M1291 784 L1297 809 H1335 L1336.500 780 Z" fill="#0a1e33"/>
 <!-- hands -->
 <path d="M1239.500 768 C1237 776 1236 786 1237.500 792 C1240 798 1244 803 1247 806.500 C1248.500 800 1248.800 794 1248.500 790 L1250.500 795 C1252 796 1253.500 795 1253.500 793 L1253.800 770 Z" fill="#f3c58d"/>
 <path d="M1243 781 C1241.500 788 1243 796 1246.500 802 C1247.500 796 1247 788 1245.500 782 Z" fill="#c99a6a" opacity=".7"/>
 <path d="M1339.500 773 C1337.500 782 1337.500 792 1339 797 C1340.500 797.500 1341.500 796 1341.500 793 L1342 789 C1342 796 1343.500 803 1345.500 807.500 C1350 804 1354 799 1357 792 C1359.500 786 1359.500 780 1358.500 775 Z" fill="#f3c58d"/>
 <path d="M1346 806 C1349 800 1352 794 1353 786 M1349.500 803 C1352.500 798 1355 792 1355.500 786" fill="none" stroke="#d8a775" stroke-width=".7"/>
 <!-- cuffs -->
 <path d="M1239.500 765 L1254 767.500 L1254 771 L1239.500 769 Z" fill="#fff"/>
 <path d="M1240.500 769.500 L1253 771.500 L1253 773.500 L1240.500 771.500 Z" fill="#b07a4a"/>
 <path d="M1340.500 768 L1362 771.500 L1361.500 775 L1340.500 772 Z" fill="#fff"/>
 <path d="M1341.500 771 L1349 772.500 L1348.500 776 L1341.500 774.500 Z" fill="#7a4a2a"/><path d="M1349 772.500 L1357.500 774 L1357 777 L1348.500 776 Z" fill="#cfd6dc"/>
 <!-- jacket body -->
 <path d="M1281 607 C1268 618 1256 626 1251 633 C1247.500 640 1248 655 1247.500 668 C1245 700 1241 735 1238.800 765.500 L1256 768 L1256.300 784.500 C1266 784 1277 782 1281.500 776 C1284 771 1284.500 766 1284.500 762 C1285.500 770 1290 779 1301 782.300 H1336 L1339.900 769 L1340 697 L1343.500 716 C1343 735 1341.500 752 1340.600 768.500 L1362.300 772 C1364.500 755 1367 738 1368.500 724 C1370 715 1372 708 1371.600 703 C1370 690 1368.500 680 1367 672 C1364 657 1360 642 1356.500 634 C1354 628 1351 626 1346 624 C1337 619 1327 612 1318.500 604 L1300 640 Z" fill="#11304e"/>
 <!-- arm shading -->
 <path d="M1251 633 C1247.500 640 1248 655 1247.500 668 C1245 700 1241 735 1238.800 765.500 L1256 768 C1254 740 1255 700 1258 668 C1259 655 1258 642 1257 634 Z" fill="#0e2a46"/>
 <path d="M1340 697 L1343.500 716 C1343 735 1341.500 752 1340.600 768.500 L1362.300 772 C1364.500 755 1367 738 1368.500 724 C1370 715 1372 708 1371.600 703 C1368 680 1362 650 1356.500 634 C1352 628 1346 628 1341 640 C1339 655 1339.500 680 1340 697 Z" fill="#0f2c49"/>
 <path d="M1340 697 L1343.700 716 L1340.800 768.500 L1339.900 768.500 Z" fill="#ededed"/>
 <!-- front line, lapels -->
 <path d="M1283.400 672 C1282.500 700 1282.500 735 1284.500 762" fill="none" stroke="#0a2036" stroke-width="1"/>
 <path d="M1281 607 L1274.500 618.500 C1277 640 1280 660 1283.400 672 L1284 640 Z" fill="#0f2b47"/>
 <path d="M1274.500 618.500 C1277 640 1280 660 1283.400 672" fill="none" stroke="#0a2036" stroke-width=".8"/>
 <path d="M1318.500 604 L1325.500 621 C1316 640 1298 660 1283.400 672" fill="none" stroke="#0a2036" stroke-width=".8"/>
 <path d="M1340 650 C1339 665 1339.500 685 1340 697" fill="none" stroke="#0a2036" stroke-width=".8"/>
 <!-- buttons -->
 <ellipse cx="1288" cy="691.700" rx="2.900" ry="2.600" fill="#06131f"/><ellipse cx="1288.600" cy="712.200" rx="2.900" ry="2.600" fill="#06131f"/><ellipse cx="1289.300" cy="731.900" rx="2.900" ry="2.600" fill="#06131f"/>
 <!-- shirt -->
 <path d="M1282 607.500 L1284 603 L1318 601.500 L1319 605 C1310 625 1296 650 1283.600 671.500 C1281.500 650 1281 628 1282 607.500 Z" fill="#e9e9e9"/>
 <path d="M1284 603 L1282 607.500 C1281.500 618 1281.500 626 1282 631 L1291.500 617 Z" fill="#fff"/>
 <path d="M1318 601.500 L1319 605 C1315 614 1311 622 1306.500 630 L1297 616.500 Z" fill="#fff"/>
 <!-- tie -->
 <path d="M1291.500 617 L1297 616 L1300.500 623 L1294.500 629.500 L1290.500 626 Z" fill="#e3241b"/>
 <path d="M1297 616 L1300.500 623 L1297 627 Z" fill="#b81810"/>
 <path d="M1290.500 626 L1294.500 629.500 L1295.200 651 L1283.700 671 C1282.800 662 1282.600 655 1283 650 Z" fill="#e3241b"/>
 <!-- neck -->
 <path d="M1285 592 L1284.500 603.500 L1294 616.500 L1316 602 L1315.500 585 Z" fill="#e2ab73"/>
 <path d="M1284.500 603.500 L1294 616.500 L1300 612.500 C1294 611 1288 607 1284.500 603.500 Z" fill="#f3c58d"/>
 <!-- ear -->
 <path d="M1314.500 574 C1318 571 1321 573 1320.500 578 C1320 583 1317.500 587 1314 587.500 Z" fill="#e8b27a"/>
 <!-- face -->
 <path d="M1277.500 566 C1277 575 1278.500 586 1281 593 C1283.500 599 1288 604.500 1294 605.500 C1301 605.500 1309 600 1313.500 593 C1316.500 587 1317.500 575 1317 563 L1300 553 L1280 556 Z" fill="#f5c98c"/>
 <path d="M1309 566 C1307.500 576 1308.500 583 1306 590 C1303 596 1298 601 1293.500 605.400 C1301 605.500 1309 600 1313.500 593 C1316.500 587 1317.500 575 1317 563 Z" fill="#e0a96f"/>
 <!-- hair -->
 <path d="M1276.500 568 C1274 558 1275.500 550 1281 546.500 C1286 543 1293 541.500 1301 542 C1310 542.500 1316.500 548 1318.800 556 C1320.500 563 1319.500 570 1317.500 575.500 L1314.500 576.500 C1314 570 1311.500 565 1309 560 C1305 558 1300 556.500 1296 557 C1290 558.500 1283.500 559 1279.500 561.500 C1278 563.500 1277.500 566 1276.500 568 Z" fill="#6b3f22"/>
 <path d="M1282 549 C1288 545 1297 544 1304 546 C1298 546.500 1290 548.500 1285 552 Z" fill="#8a5632"/>
 <!-- brows, eyes, nose, mouth -->
 <path d="M1279.500 571 C1282 569.500 1285 569.500 1287.500 570.500 M1295 570 C1299 568.500 1303 568.500 1306.500 570" fill="none" stroke="#5a351d" stroke-width="1.300" stroke-linecap="round"/>
 <ellipse cx="1283" cy="574.800" rx="2.600" ry="1.300" fill="#fff"/><circle cx="1283.200" cy="574.800" r="1.200" fill="#3a2718"/>
 <ellipse cx="1300" cy="574.600" rx="3" ry="1.400" fill="#fff"/><circle cx="1299.600" cy="574.600" r="1.300" fill="#3a2718"/>
 <path d="M1288.500 576 C1288 581 1287 584 1286.300 586 C1288 587.300 1291 587.300 1293 586.300" fill="none" stroke="#d09a63" stroke-width="1"/>
 <path d="M1285.800 592 C1289 590.300 1295 590.300 1298.800 591.500 C1297 595.500 1293.500 597 1290.500 596.800 C1288 596.500 1286.500 594.500 1285.800 592 Z" fill="#a5524c"/>
 <path d="M1287 592 C1290 591 1294.500 591 1297.500 592 C1295 594 1290 594.300 1287 592 Z" fill="#fff"/>
 </g>
</svg>
<!-- STATUS BAR -->
<div class="a" style="left:36px;top:808.600px;width:1366px;height:22.400px;background:#d24726"></div>
<div class="a" style="left:36px;top:830.700px;width:1366px;height:1.300px;background:#3a2226"></div>
<div class="a" style="left:1053px;top:808.600px;width:38px;height:22.100px;background:#b83b1e"></div>
<style>.st{position:absolute;white-space:nowrap;line-height:14px;height:14px;font-size:11.500px;color:#fff;letter-spacing:-.45px}</style>
<div class="st" style="left:43px;top:813px;transform:scaleX(0.96);transform-origin:0 50%">SLIDE 3 OF 3</div>
<svg style="left:126px;top:813px" width="16" height="13" viewBox="0 0 16 13"><path d="M7 2 C5 .8 3 .8 .7 1.200 V10.500 C3 10 5 10 7 11.500 Z M7 11.500 C8.500 10.300 10 10 11.500 10.200" fill="none" stroke="#fff" stroke-width="1.100"/><path d="M9 1.200 H14.500 M9 1.200 V6" fill="none" stroke="#fff" stroke-width="1"/><path d="M9.500 6.500 L11.500 9 L15 3.500" fill="none" stroke="#fff" stroke-width="1.300"/></svg>
<div class="st" style="left:158px;top:813px;transform:scaleX(0.95);transform-origin:0 50%">ENGLISH (UNITED STATES)</div>
<svg style="left:885px;top:813px" width="13" height="13" viewBox="0 0 13 13"><path d="M6.500 0 L9.500 3.500 H3.500 Z" fill="#fff"/><path d="M1 5.500 H12 M1 8.500 H12 M1 11.500 H9" stroke="#fff" stroke-width="1.100"/></svg>
<div class="st" style="left:903px;top:813px;transform:scaleX(0.87);transform-origin:0 50%">NOTES</div>
<svg style="left:957px;top:813px" width="13" height="13" viewBox="0 0 13 13"><path d="M.5 .5 H12.500 V9 H6 L3 12.500 V9 H.5 Z" fill="#fff"/></svg>
<div class="st" style="left:974px;top:813px;transform:scaleX(0.945);transform-origin:0 50%">COMMENTS</div>
<svg style="left:1065px;top:813px" width="15" height="13" viewBox="0 0 15 13"><path d="M0 0 H15 V13 H0 Z M4.500 1.500 V7 H13.500 V1.500 Z M1.500 1.500 V11.500 H3 V1.500 Z M4.500 8.500 V11.500 H13.500 V8.500 Z" fill="#fbeee9" fill-rule="evenodd"/><rect x="6.500" y="3" width="5" height="2.500" fill="#fbeee9"/></svg>
<svg style="left:1103px;top:813px" width="15" height="13" viewBox="0 0 15 13"><path d="M0 0 H6.500 V5.500 H0 Z M8.500 0 H15 V5.500 H8.500 Z M0 7.500 H6.500 V13 H0 Z M8.500 7.500 H15 V13 H8.500 Z" fill="#fbeee9"/></svg>
<svg style="left:1141px;top:813px" width="14" height="13" viewBox="0 0 14 13"><path d="M7 1.500 C5 .3 3 .3 .6 .8 V11 C3 10.500 5 10.500 7 12 C9 10.500 11 10.500 13.400 11 V.8 C11 .3 9 .3 7 1.500 Z M7 1.500 V12" fill="none" stroke="#fbeee9" stroke-width="1.100"/><path d="M2 3 H5.500 M2 5 H5.500 M2 7 H5.500 M2 9 H5.500 M8.500 3 H12 M8.500 5 H12 M8.500 7 H12 M8.500 9 H12" stroke="#fbeee9" stroke-width=".8"/></svg>
<svg style="left:1178px;top:813px" width="15" height="13" viewBox="0 0 15 13"><path d="M0 .8 H15" stroke="#fbeee9" stroke-width="1.600"/><rect x="2" y="2.500" width="11" height="5" fill="none" stroke="#fbeee9" stroke-width="1.100"/><path d="M7.500 7.500 V11.500 M4.500 12 H10.500" stroke="#fbeee9" stroke-width="1.200"/></svg>
<div class="a" style="left:1210px;top:819px;width:5px;height:2px;background:#fff"></div>
<div class="a" style="left:1221px;top:819.500px;width:99px;height:1px;background:#f6d9d0"></div>
<div class="a" style="left:1270px;top:817px;width:1px;height:6px;background:#f6d9d0"></div>
<div class="a" style="left:1251px;top:813px;width:4px;height:13px;background:#fff"></div>
<div class="a" style="left:1324px;top:819px;width:7px;height:2px;background:#fff"></div><div class="a" style="left:1326.500px;top:816.500px;width:2px;height:7px;background:#fff"></div>
<div class="st" style="left:1346px;top:813px">68%</div>
<svg style="left:1382px;top:813px" width="14" height="13" viewBox="0 0 14 13"><rect x=".5" y=".5" width="13" height="12" fill="none" stroke="#fbeee9"/><path d="M7 2 V11 M2 6.500 H12 M5.500 3.500 L7 2 L8.500 3.500 M5.500 9.500 L7 11 L8.500 9.500 M3.500 5 L2 6.500 L3.500 8 M10.500 5 L12 6.500 L10.500 8" fill="none" stroke="#fbeee9" stroke-width=".9"/></svg>

<!-- PLAYER BAR -->
<div class="a" style="left:36px;top:832px;width:1366px;height:4px;background:#b4b4b4"></div>
<div class="a" style="left:36px;top:832px;width:884px;height:4px;background:#ff6627"></div>
<div class="a" style="left:36px;top:836px;width:1366px;height:33px;background:#ebebeb"></div>
<svg style="left:49px;top:844px" width="16" height="19" viewBox="0 0 16 19"><path d="M.5 .5 L15.500 9.500 L.5 18.500 Z" fill="#909090"/></svg>
<svg style="left:81px;top:842px" width="20" height="22" viewBox="0 0 20 22"><path d="M7.200 5 A7 7 0 1 0 12.500 4.900" fill="none" stroke="#9c9c9c" stroke-width="2.500"/><path d="M4.200 4.600 L10.400 .6 V7.600 Z" fill="#9c9c9c"/>
 <text x="9.900" y="15" text-anchor="middle" font-family="Liberation Sans, sans-serif" font-size="8.500" font-weight="bold" fill="#949494" letter-spacing="-.5">10</text></svg>
<svg style="left:114px;top:845px" width="15" height="17" viewBox="0 0 15 17"><path d="M0 0 H10 L15 5 V17 H0 Z" fill="#9a9a9a"/><path d="M10 0 V5 H15" fill="#c4c4c4"/><path d="M3 8.500 H12 M3 11 H12 M3 13.500 H12" stroke="#ebebeb" stroke-width="1.100"/></svg>
<svg style="left:144px;top:844px" width="21" height="19" viewBox="0 0 21 19"><path d="M0 6 H4.500 L10.500 .5 V18.500 L4.500 13 H0 Z" fill="#9a9a9a"/><path d="M12.500 6.500 C14 8 14 11 12.500 12.500 M14.500 4 C17.500 7 17.500 12 14.500 15 M16.800 1.800 C21 6 21 13 16.800 17.200" fill="none" stroke="#a8a8a8" stroke-width="1.500"/></svg>
<div class="a" style="left:180px;top:852px;width:90px;height:3px;background:#78b2d2;border-radius:1.500px;box-shadow:0 0 0 .5px #b5d3e4"></div>
<div class="a" style="left:268px;top:848px;width:11px;height:11px;background:#cdcdcd;border:1px solid #9c9c9c;box-shadow:0 1px 1px rgba(0,0,0,.2)"></div>
<!-- LaSkola logo -->
<svg style="left:668px;top:840px" width="25" height="25" viewBox="0 0 25 25" fill="none" stroke="#b2b2b2" stroke-width="1.200">
 <path d="M6 .8 H18.500 L23.700 6 V15.500 L18.500 20.500 H15 M6 .8 L.8 6 V15.500 L6 20.500 H9.500"/>
 <path d="M7 3.500 H17.500 M9.500 3.500 V20.500 M12.200 3.500 V17.500 H15 V20.500 M15 3.500 V8 M6.500 20.500 H18"/>
 <path d="M.8 9 H6.500 V6.500 M.8 12.500 H6.500 V17 H3.500 M23.700 9 H17.500 V6.500 M17.500 9 V12.500 H23.700 M20.500 12.500 V17 H17.500"/>
 <path d="M8.500 23.800 H16.500" stroke-width="1.500"/>
</svg>
<div class="t" style="left:698px;top:838px;font-size:21.500px;line-height:28px;height:28px;color:#a8a8a8;-webkit-text-stroke:.5px #ebebeb;transform:scaleX(.918);transform-origin:0 50%">LaSkola</div>
<svg style="left:1278px;top:842px" width="21" height="21" viewBox="0 0 21 21"><circle cx="10.500" cy="10.500" r="9" fill="none" stroke="#b4b4b4" stroke-width="2"/><path d="M10.500 4.500 V11 L14.500 14" fill="none" stroke="#b4b4b4" stroke-width="1.800"/></svg>
<div class="t" style="left:1306px;top:841px;font-family:'Liberation Serif',serif;font-weight:bold;font-size:19px;line-height:22px;height:22px;color:#b6b6b6;letter-spacing:1.200px">04:05</div>
<svg style="left:1374px;top:845px" width="19" height="17" viewBox="0 0 19 17"><path d="M1 5.500 V1 H6.500 M12.500 1 H18 V5.500 M18 11.500 V16 H12.500 M6.500 16 H1 V11.500" fill="none" stroke="#9a9a9a" stroke-width="2"/></svg>
<!-- NEW SLIDE GALLERY -->
<svg width="0" height="0" style="left:0;top:0"><defs><pattern id="pdot" width="8" height="8" patternUnits="userSpaceOnUse"><rect width="8" height="8" fill="#fff"/><rect x="1" y="1" width="1" height="1" fill="#29abe2"/><rect x="5" y="5" width="1" height="1" fill="#29abe2"/></pattern><pattern id="parr" width="8" height="8" patternUnits="userSpaceOnUse"><rect width="8" height="8" fill="#fff"/><g fill="#4a94e0"><rect x="2" y="0" width="1" height="1"/><rect x="3" y="1" width="1" height="1"/><rect x="2" y="2" width="1" height="1"/><rect x="7" y="4" width="1" height="1"/><rect x="6" y="5" width="1" height="1"/><rect x="7" y="6" width="1" height="1"/></g></pattern><g id="mini"><rect x="0" y="0" width="27" height="12" fill="#f1f3f6"/><rect x="1" y="1" width="8" height="5" fill="#cfd2d6"/><rect x="10.500" y="1" width="3" height="5" fill="#7fa6d8"/><rect x="13.500" y="1" width="3.500" height="5" fill="#e6c27a"/><rect x="19" y="1" width="7" height="1.500" fill="#6fb59a"/><rect x="19" y="3.500" width="7" height="2" fill="#dfe3e8"/><rect x="1" y="8" width="8" height="3" fill="#a9c8ea"/><rect x="10" y="8" width="7" height="3" fill="#c5d9ef"/><rect x="18" y="8.500" width="8" height="2.500" fill="#9cc0e8"/><rect x="5" y="6.500" width="3" height="1" fill="#f0c060"/><rect x="15" y="6.500" width="3" height="1" fill="#f0c060"/></g></defs></svg>
<div class="a" style="left:198px;top:186px;width:345px;height:641px;background:#fff;border:1px solid #c6c6c6;box-shadow:1px 1px 3px rgba(0,0,0,.18);overflow:hidden"><div class="a" style="left:-199px;top:-187px;width:1440px;height:905px">
<div class="thumb" style="left:204px;top:157px"><div class="dash" style="left:9px;top:12px;width:78px;height:39px;"></div><div class="a" style="left:46px;top:12px;height:39px;width:0;border-left:1px dotted #6a6a6a"></div><div class="a" style="left:48px;top:12px;height:39px;width:0;border-left:1px dotted #6a6a6a"></div><svg style="left:15px;top:30px;opacity:0.9" width="24" height="11" viewBox="0 0 27 12" preserveAspectRatio="none"><use href="#mini"/></svg><svg style="left:54px;top:30px;opacity:0.9" width="26" height="11" viewBox="0 0 27 12" preserveAspectRatio="none"><use href="#mini"/></svg><svg style="left:35px;top:20px" width="24" height="27" viewBox="0 0 212 198" preserveAspectRatio="none"><use href="#tree" width="212" height="198"/></svg></div>
<div class="thumb" style="left:312px;top:157px"><div class="dash" style="left:9px;top:12px;width:78px;height:39px;"></div><div class="a" style="left:46px;top:12px;height:39px;width:0;border-left:1px dotted #6a6a6a"></div><div class="a" style="left:48px;top:12px;height:39px;width:0;border-left:1px dotted #6a6a6a"></div><svg style="left:15px;top:31px;opacity:0.9" width="24" height="11" viewBox="0 0 27 12" preserveAspectRatio="none"><use href="#mini"/></svg><svg style="left:55px;top:31px;opacity:0.9" width="26" height="11" viewBox="0 0 27 12" preserveAspectRatio="none"><use href="#mini"/></svg><svg style="left:35px;top:20px" width="24" height="27" viewBox="0 0 212 198" preserveAspectRatio="none"><use href="#tree" width="212" height="198"/></svg></div>
<div class="thumb" style="left:420px;top:157px"><svg style="left:37px;top:20px" width="22" height="25" viewBox="0 0 212 198" preserveAspectRatio="none"><use href="#tree" width="212" height="198"/></svg></div>
<div class="glabel" style="left:200px;top:216px;letter-spacing:.05px">Two Content</div>
<div class="glabel" style="left:308px;top:216px;letter-spacing:.05px">Comparison</div>
<div class="glabel" style="left:416px;top:216px;letter-spacing:.05px">Title Only</div>
<div class="thumb" style="left:204px;top:253px"><svg style="left:0;top:0" width="98" height="56"><rect width="98" height="56" fill="url(#pdot)"/></svg><div class="dash" style="left:14px;top:6px;width:68px;height:41px;"></div><svg style="left:44px;top:24px;opacity:0.8" width="9" height="6" viewBox="0 0 27 12" preserveAspectRatio="none"><use href="#mini"/></svg></div>
<div class="thumb" style="left:312px;top:253px"><div class="dash" style="left:9px;top:6px;width:78px;height:12px;border-radius:2px"></div><div class="a" style="left:7px;top:8px;width:1px;height:9px;background:#29abe2"></div><svg style="left:35px;top:23px" width="25" height="23" viewBox="0 0 212 198" preserveAspectRatio="none"><use href="#tree" width="212" height="198"/></svg></div>
<div class="thumb" style="left:420px;top:253px"><div class="dash" style="left:9px;top:4px;width:36px;height:15px;"></div><div class="dash" style="left:9px;top:18px;width:36px;height:31px;"></div><div class="dash" style="left:46px;top:7px;width:45px;height:42px;"></div><div class="a" style="left:7px;top:7px;width:1px;height:9px;background:#29abe2"></div><svg style="left:34px;top:23px" width="24" height="23" viewBox="0 0 212 198" preserveAspectRatio="none"><use href="#tree" width="212" height="198"/></svg><svg style="left:55px;top:22px;opacity:0.9" width="27" height="12" viewBox="0 0 27 12" preserveAspectRatio="none"><use href="#mini"/></svg></div>
<div class="glabel" style="left:200px;top:312px;letter-spacing:.05px">Blank</div>
<div class="glabel" style="left:308px;top:312px;letter-spacing:.05px">My Layout</div>
<div class="glabel" style="left:416px;top:312px;letter-spacing:.05px">Content with<br>Caption</div>
<div class="thumb" style="left:204px;top:349px"><div class="a" style="left:1px;top:1px;width:96px;height:36px;background:#74ccee;border:1px dotted #555"></div><div class="a" style="left:45px;top:15px;width:9px;height:6px;background:#eef6fb;border-top:2px solid #c9d3da"></div><div class="dash" style="left:4px;top:40px;width:62px;height:12px;"></div><div class="dash" style="left:67px;top:40px;width:28px;height:12px;"></div><div class="a" style="left:68px;top:42px;width:1px;height:8px;background:#29abe2"></div></div>
<div class="glabel" style="left:200px;top:408px;letter-spacing:.05px">Picture with<br>Caption</div>
<div class="a" style="left:199px;top:441px;width:325px;height:23px;background:#efefef"></div>
<div class="t" style="left:208px;top:446px;font-weight:bold;color:#6a6a6a;font-size:12px;transform:scaleX(.937);transform-origin:0 50%">Custom Design</div>
<div class="thumb" style="left:204px;top:468px"><svg style="left:0;top:0" width="98" height="56"><rect width="98" height="56" fill="url(#parr)"/></svg><div class="dash" style="left:12px;top:9px;width:74px;height:35px;"></div><div class="a" style="left:12px;top:28px;width:74px;height:0;border-top:2px dotted #6a6a6a"></div></div>
<div class="thumb" style="left:312px;top:468px"><svg style="left:0;top:0" width="98" height="56"><rect width="98" height="56" fill="url(#parr)"/></svg><div class="dash" style="left:7px;top:3px;width:85px;height:47px;"></div><div class="a" style="left:7px;top:14px;width:85px;height:0;border-top:2px dotted #6a6a6a"></div><svg style="left:36px;top:26px;opacity:0.95" width="27" height="12" viewBox="0 0 27 12" preserveAspectRatio="none"><use href="#mini"/></svg></div>
<div class="thumb" style="left:420px;top:468px"><svg style="left:0;top:0" width="98" height="56"><rect width="98" height="56" fill="url(#parr)"/></svg><div class="dash" style="left:8px;top:14px;width:83px;height:35px;"></div><div class="a" style="left:8px;top:36px;width:83px;height:0;border-top:2px dotted #6a6a6a"></div></div>
<div class="glabel" style="left:200px;top:527px;letter-spacing:.05px">Title Slide</div>
<div class="glabel" style="left:308px;top:527px;letter-spacing:.05px">Title and Content</div>
<div class="glabel" style="left:416px;top:527px;letter-spacing:.05px">Section Header</div>
<div class="thumb" style="left:204px;top:564px"><svg style="left:0;top:0" width="98" height="56"><rect width="98" height="56" fill="url(#parr)"/></svg><div class="dash" style="left:7px;top:3px;width:85px;height:47px;"></div><div class="a" style="left:7px;top:14px;width:85px;height:0;border-top:2px dotted #6a6a6a"></div><div class="a" style="left:48px;top:15px;height:35px;width:0;border-left:2px dotted #6a6a6a"></div><svg style="left:15px;top:25px;opacity:0.95" width="27" height="12" viewBox="0 0 27 12" preserveAspectRatio="none"><use href="#mini"/></svg><svg style="left:57px;top:25px;opacity:0.95" width="27" height="12" viewBox="0 0 27 12" preserveAspectRatio="none"><use href="#mini"/></svg></div>
<div class="thumb" style="left:312px;top:564px"><svg style="left:0;top:0" width="98" height="56"><rect width="98" height="56" fill="url(#parr)"/></svg><div class="dash" style="left:7px;top:3px;width:85px;height:47px;"></div><div class="a" style="left:7px;top:14px;width:85px;height:0;border-top:1px dotted #6a6a6a"></div><div class="a" style="left:7px;top:20px;width:85px;height:0;border-top:1px dotted #6a6a6a"></div><div class="a" style="left:48px;top:15px;height:35px;width:0;border-left:2px dotted #6a6a6a"></div><svg style="left:15px;top:28px;opacity:0.95" width="27" height="12" viewBox="0 0 27 12" preserveAspectRatio="none"><use href="#mini"/></svg><svg style="left:56px;top:28px;opacity:0.95" width="27" height="12" viewBox="0 0 27 12" preserveAspectRatio="none"><use href="#mini"/></svg></div>
<div class="thumb" style="left:420px;top:564px"><svg style="left:0;top:0" width="98" height="56"><rect width="98" height="56" fill="url(#parr)"/></svg><div class="dash" style="left:8px;top:3px;width:83px;height:13px;"></div></div>
<div class="glabel" style="left:200px;top:623px;letter-spacing:.05px">Two Content</div>
<div class="glabel" style="left:308px;top:623px;letter-spacing:.05px">Comparison</div>
<div class="glabel" style="left:416px;top:623px;letter-spacing:.05px">Title Only</div>
<div class="thumb" style="left:204px;top:660px"><svg style="left:0;top:0" width="98" height="56"><rect width="98" height="56" fill="url(#parr)"/></svg></div>
<div class="thumb" style="left:312px;top:660px"><svg style="left:0;top:0" width="98" height="56"><rect width="98" height="56" fill="url(#parr)"/></svg><div class="dash" style="left:7px;top:4px;width:33px;height:13px;"></div><div class="dash" style="left:7px;top:16px;width:33px;height:33px;"></div><div class="dash" style="left:41px;top:8px;width:51px;height:41px;"></div><svg style="left:53px;top:22px;opacity:0.95" width="27" height="12" viewBox="0 0 27 12" preserveAspectRatio="none"><use href="#mini"/></svg></div>
<div class="thumb" style="left:420px;top:660px"><svg style="left:0;top:0" width="98" height="56"><rect width="98" height="56" fill="url(#parr)"/></svg><div class="dash" style="left:7px;top:4px;width:33px;height:13px;"></div><div class="dash" style="left:7px;top:16px;width:33px;height:33px;"></div><div class="dash" style="left:41px;top:8px;width:51px;height:41px;"></div><svg style="left:61px;top:25px;opacity:0.8" width="11" height="6" viewBox="0 0 27 12" preserveAspectRatio="none"><use href="#mini"/></svg></div>
<div class="glabel" style="left:200px;top:719px;letter-spacing:.05px">Blank</div>
<div class="glabel" style="left:308px;top:719px;letter-spacing:.05px">Content with<br>Caption</div>
<div class="glabel" style="left:416px;top:719px;letter-spacing:.05px">Picture with<br>Caption</div>
<div class="a" style="left:525px;top:187px;width:15px;height:563px;background:#f1f1f1"></div>
<div class="a" style="left:525px;top:190px;width:15px;height:15px;background:#fff;border:1px solid #ababab"></div>
<div class="ar" style="left:528px;top:195px;transform:rotate(180deg);border-width:4px 4px 0 4px;border-style:solid;border-color:#666 transparent transparent transparent"></div>
<div class="a" style="left:525px;top:319px;width:15px;height:418px;background:#f0f0f0;border:1px solid #ababab"></div>
<div class="a" style="left:525px;top:736px;width:15px;height:13px;background:#fff;border:1px solid #ababab"></div>
<div class="ar" style="left:528px;top:741px;border-width:4px 4px 0 4px;border-style:solid;border-color:#666 transparent transparent transparent"></div>
<div class="a" style="left:203px;top:752px;width:336px;height:1px;background:#e1e1e1"></div>
<div class="t" style="left:231px;top:759px;color:#555;transform:scaleX(0.955);transform-origin:0 50%"><u>D</u>uplicate Selected Slides</div>
<svg style="left:204px;top:757px" width="17" height="17" viewBox="0 0 17 17"><path d="M3.500 6.500 V13.500 H5" fill="none" stroke="#888"/><rect x="6.500" y="7.500" width="9" height="7" fill="#fff" stroke="#777"/><path d="M8 10.500 H14 M8 12.500 H14" stroke="#aaa" stroke-width=".8"/><path d="M5.500 4.500 H13" stroke="#888"/><path d="M2.500 0 V5 M0 2.500 H5 M.7 .7 L4.300 4.300 M4.300 .7 L.7 4.300" stroke="#ecc060" stroke-width=".8"/></svg>
<div class="t" style="left:231px;top:783px;color:#555;transform:scaleX(0.988);transform-origin:0 50%">Slides from Out<u>l</u>ine...</div>
<svg style="left:204px;top:781px" width="17" height="17" viewBox="0 0 17 17"><rect x=".5" y="1.500" width="9" height="7" fill="#fff" stroke="#888"/><path d="M2 4 H8" stroke="#bbb" stroke-width=".8"/><rect x="3.500" y="5.500" width="10" height="8" fill="#fff" stroke="#777"/><path d="M5 8.500 H12 M5 10.500 H12" stroke="#aaa" stroke-width=".8"/><rect x="5.500" y="9.500" width="10" height="6" fill="#fff" stroke="#777"/><path d="M7 12.500 H14" stroke="#aaa" stroke-width=".8"/></svg>
<div class="t" style="left:231px;top:807px;color:#555;transform:scaleX(0.892);transform-origin:0 50%"><u>R</u>euse Slides...</div>
<svg style="left:204px;top:805px" width="17" height="17" viewBox="0 0 17 17"><rect x="4.500" y="5.500" width="10" height="9" fill="#fff" stroke="#777"/><path d="M6 8.500 H13 M6 10.500 H13 M6 12.500 H11" stroke="#aaa" stroke-width=".8"/><path d="M2.500 0 V5 M0 2.500 H5 M.7 .7 L4.300 4.300 M4.300 .7 L.7 4.300" stroke="#ecc060" stroke-width=".8"/></svg>
</div></div>
<!-- mouse cursor -->
<svg style="left:537px;top:641px" width="14" height="21" viewBox="0 0 14 21"><path d="M1.200 1.500 V17.500 L5 14 L7.500 19.800 L10 18.800 L7.600 13 H12.500 Z" fill="#fff" stroke="#10142a" stroke-width="1.100" stroke-linejoin="miter"/></svg>
</div></div>
</body>
</html>
